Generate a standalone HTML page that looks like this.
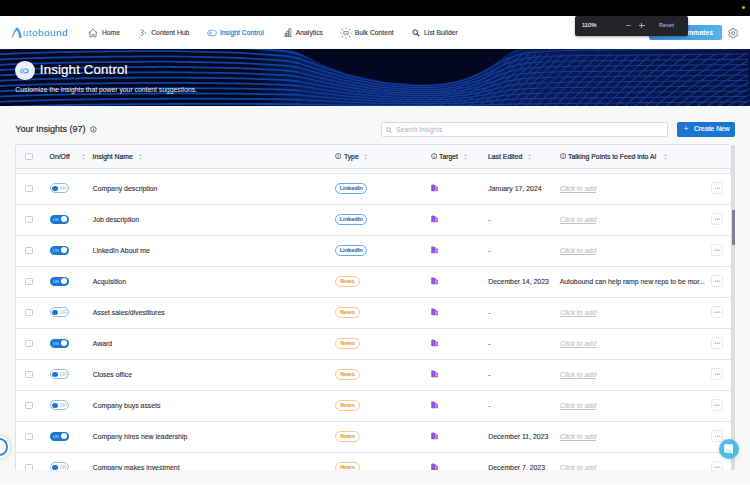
<!DOCTYPE html><html><head><meta charset="utf-8"><style>
*{box-sizing:border-box;margin:0;padding:0}
html,body{width:750px;height:485px;overflow:hidden;background:#f7f8fa;font-family:"Liberation Sans",sans-serif;color:#34343e}
.a{position:absolute}
#top{left:0;top:0;width:750px;height:16px;background:#000}
#nav{left:0;top:16px;width:750px;height:32px;background:#fff}
.ni{position:absolute;top:0.5px;height:32px;line-height:32px;font-size:6.8px;color:#42424e;white-space:nowrap;-webkit-text-stroke-width:0.15px}
.ni svg{position:absolute}
#banner{left:0;top:48.5px;width:750px;height:57.2px;overflow:hidden}
.tg{position:absolute;width:19px;height:9.4px;border-radius:5px}
.tg.on{background:#1b78d4}
.tg.off{background:#fff;border:0.9px solid #8fbfee;height:9.8px}
.tg .kn{position:absolute;width:6px;height:6px;border-radius:50%;top:1.7px}
.tg.on .kn{background:#fff;left:11px}
.tg.off .kn{background:#1b78d4;left:1.2px;top:1.4px;width:5.6px;height:5.6px}
.tg .tt{position:absolute;font-size:4.4px;top:0;line-height:9.4px}
.tg.on .tt{color:#d8e8f8;left:3px;transform:scaleX(0.85);transform-origin:0 0}
.tg.off .tt{color:#8fbcec;left:9px;line-height:9.4px;font-size:4.8px;transform:scaleX(0.78);transform-origin:0 0}
.row{position:absolute;left:16px;width:715px;height:31px;background:#fff;border-bottom:1px solid #e4e6f0}
.cb{position:absolute;width:7.5px;height:7.5px;border:0.9px solid #c9cad3;border-radius:1.5px;background:#fff}
.txt{position:absolute;font-size:6.9px;white-space:nowrap;line-height:8px;margin-top:0.5px;-webkit-text-stroke-width:0.12px}
.badge{position:absolute;height:11px;border-radius:6px;font-size:5.6px;font-weight:bold;line-height:9.4px;text-align:center;background:#fff}
.li{border:0.9px solid #6aa6e4;color:#2c68b4;width:32px;-webkit-text-stroke:0.1px #2c68b4}
.nw{border:0.9px solid #f9c592;color:#f39c44;width:24.5px;-webkit-text-stroke:0.12px #f39c44}
.cta{color:#c2c2ca;font-style:italic;text-decoration:underline}
.dots{position:absolute;width:12px;height:12px;border:0.8px solid #e9eaf1;border-radius:2.5px;background:#fff}
.dots i{position:absolute;top:5.1px;width:1.2px;height:1.2px;background:#9a9ba6;border-radius:50%}
.hd{position:absolute;font-size:6.85px;color:#2e2e38;white-space:nowrap;line-height:8px;-webkit-text-stroke:0.22px #2e2e38}
.srt{position:absolute}
.inf{position:absolute}
</style></head><body><div id="top" class="a"><div class="a" style="left:741.5px;top:5.5px;width:3px;height:3px;border-radius:50%;background:#f5a524"></div></div><div id="nav" class="a"><svg class="a" style="left:11px;top:10.6px" width="12" height="12" viewBox="0 0 12 12"><defs><linearGradient id="lg" x1="0" y1="0" x2="0" y2="1"><stop offset="0" stop-color="#3d8fdc"/><stop offset="1" stop-color="#52baf0"/></linearGradient><linearGradient id="lg2" x1="0" y1="0" x2="1" y2="0"><stop offset="0" stop-color="#5ab4ea"/><stop offset="1" stop-color="#3f95de"/></linearGradient></defs><path d="M0.7 10.6 C 2.1 6.8, 3.8 0.7, 6.2 0.6 C 8 0.6, 9.4 4.8, 11 10.6 L 8.3 10.9 C 7.5 6.8, 6.9 3.6, 5.8 3.4 C 4.7 3.4, 3.1 7.4, 1.6 10.7 Z" fill="url(#lg2)"/></svg><div class="a" style="left:23.3px;top:0.8px;height:32px;line-height:32px;font-size:8.8px;-webkit-text-stroke:0.12px #48a2e2;letter-spacing:0.45px;transform:scaleX(1.12);transform-origin:0 0;color:#3f93dc;background:linear-gradient(90deg,#5ab8ea,#3a86d6);-webkit-background-clip:text;-webkit-text-fill-color:transparent">utobound</div><div class="ni" style="left:88.8px;width:73.10000000000001px"><svg style="left:-0.5px;top:11px" width="10" height="10" viewBox="0 0 24 24"><path d="M2.25 12l8.954-8.955c.44-.439 1.152-.439 1.591 0L21.75 12M4.5 9.75v10.125c0 .621.504 1.125 1.125 1.125H9.75v-4.875c0-.621.504-1.125 1.125-1.125h2.25c.621 0 1.125.504 1.125 1.125V21h4.125c.621 0 1.125-.504 1.125-1.125V9.75" stroke="#55555f" stroke-width="1.7" fill="none" stroke-linecap="round" stroke-linejoin="round"/></svg><span style="position:absolute;left:13.100000000000009px;color:#42424e;font-weight:normal;">Home</span></div><div class="ni" style="left:139.2px;width:72.0px"><svg style="left:0;top:11px" width="8" height="10" viewBox="0 0 8 10"><path d="M1.5 2.5 C3 1.5 5 2 4.5 3.5 C4 4.5 2.5 4.5 2.5 4.5 C4.5 4.8 5 6.5 3.5 7.2 C2.5 7.6 1.5 7 1.2 6.5 M5.5 4 C6.5 4 7 5 6.5 6 M1 8.5 L0.5 9.5" stroke="#666670" stroke-width="0.7" fill="none"/></svg><span style="position:absolute;left:12.0px;color:#42424e;font-weight:normal;">Content Hub</span></div><div class="ni" style="left:206.9px;width:73.0px"><svg style="left:0;top:12px" width="10" height="8" viewBox="0 0 10 8"><rect x="0.6" y="1.2" width="8.8" height="5.6" rx="2.8" stroke="#4a9ae0" stroke-width="0.8" fill="none"/><circle cx="3.4" cy="4" r="1.7" fill="#9cc9f0"/></svg><span style="position:absolute;left:13.0px;color:#3a8ad6;font-weight:normal;-webkit-text-stroke:0.25px #3a8ad6">Insight Control</span></div><div class="ni" style="left:283.7px;width:72.10000000000002px"><svg style="left:0;top:11.5px" width="8" height="9" viewBox="0 0 8 9"><path d="M0.6 8.4 H7.4 M1 8.4 V5.5 H2.8 V8.4 M2.8 8.4 V3.2 H4.8 V8.4 M4.8 8.4 V0.8 H6.8 V8.4" stroke="#55555f" stroke-width="0.7" fill="none"/></svg><span style="position:absolute;left:12.100000000000023px;color:#42424e;font-weight:normal;">Analytics</span></div><div class="ni" style="left:340.4px;width:74.40000000000003px"><svg style="left:0;top:10px" width="12" height="12" viewBox="0 0 12 12"><circle cx="11.00" cy="6.00" r="0.6" fill="#6a6a74"/><circle cx="9.54" cy="9.54" r="0.6" fill="#6a6a74"/><circle cx="6.00" cy="11.00" r="0.6" fill="#6a6a74"/><circle cx="2.46" cy="9.54" r="0.6" fill="#6a6a74"/><circle cx="1.00" cy="6.00" r="0.6" fill="#6a6a74"/><circle cx="2.46" cy="2.46" r="0.6" fill="#6a6a74"/><circle cx="6.00" cy="1.00" r="0.6" fill="#6a6a74"/><circle cx="9.54" cy="2.46" r="0.6" fill="#6a6a74"/><rect x="3.9" y="4.4" width="4.2" height="3.4" stroke="#6a6a74" stroke-width="0.6" fill="none"/><path d="M4.4 6.1 H7.6" stroke="#6a6a74" stroke-width="0.5"/></svg><span style="position:absolute;left:14.400000000000034px;color:#42424e;font-weight:normal;">Bulk Content</span></div><div class="ni" style="left:411.8px;width:72.30000000000001px"><svg style="left:0;top:12px" width="8" height="8" viewBox="0 0 8 8"><circle cx="3.2" cy="3.2" r="2.3" stroke="#2e2e36" stroke-width="1" fill="none"/><path d="M4.9 4.9 L7.2 7.2" stroke="#2e2e36" stroke-width="1.1"/></svg><span style="position:absolute;left:12.300000000000011px;color:#42424e;font-weight:normal;">List Builder</span></div><div class="a" style="left:649px;top:8.5px;width:73px;height:15px;border-radius:2px;background:linear-gradient(90deg,#3a8ad8,#4fb6ea);color:#fff;font-size:6.8px;line-height:15px;text-align:right;padding-right:9px;font-weight:bold">Invite Teammates</div><svg class="a" style="left:726.8px;top:11px" width="12.4" height="12.4" viewBox="0 0 24 24"><path fill="none" stroke="#55555f" stroke-width="1.5" stroke-linejoin="round" d="M9.594 3.94c.09-.542.56-.94 1.11-.94h2.593c.55 0 1.02.398 1.11.94l.213 1.281c.063.374.313.686.645.87.074.04.147.083.22.127.325.196.72.257 1.075.124l1.217-.456a1.125 1.125 0 0 1 1.37.49l1.296 2.247a1.125 1.125 0 0 1-.26 1.431l-1.003.827c-.293.241-.438.613-.43.992a7.723 7.723 0 0 1 0 .255c-.008.378.137.75.43.991l1.004.827c.424.35.534.955.26 1.43l-1.298 2.247a1.125 1.125 0 0 1-1.369.491l-1.217-.456c-.355-.133-.75-.072-1.076.124a6.470 6.470 0 0 1-.22.128c-.331.183-.581.495-.644.869l-.213 1.281c-.09.543-.56.94-1.11.94h-2.594c-.55 0-1.019-.398-1.110-.94l-.213-1.281c-.062-.374-.312-.686-.644-.87a6.520 6.520 0 0 1-.22-.127c-.325-.196-.72-.257-1.076-.124l-1.217.456a1.125 1.125 0 0 1-1.369-.49l-1.297-2.247a1.125 1.125 0 0 1 .26-1.431l1.004-.827c.292-.24.437-.613.43-.991a6.932 6.932 0 0 1 0-.255c.007-.38-.138-.751-.43-.992l-1.004-.827a1.125 1.125 0 0 1-.26-1.43l1.297-2.247a1.125 1.125 0 0 1 1.37-.491l1.216.456c.356.133.751.072 1.076-.124.072-.044.146-.086.22-.128.332-.183.582-.495.644-.869l.214-1.28Z"/><circle cx="12" cy="12" r="3" fill="none" stroke="#55555f" stroke-width="1.5"/></svg></div><div class="a" style="left:575px;top:15.5px;width:113px;height:20px;background:#232428;border-radius:2px;box-shadow:0 1px 3px rgba(0,0,0,0.35)"><span class="a" style="left:7px;top:0.6px;line-height:19px;font-size:5.8px;color:#ededee;-webkit-text-stroke:0.12px #ededee">110%</span><span class="a" style="left:50.5px;top:9.7px;width:5px;height:0.8px;background:#8c8c92"></span><span class="a" style="left:64px;top:9.7px;width:5.5px;height:0.8px;background:#a8a8ae"></span><span class="a" style="left:66.35px;top:7.4px;width:0.8px;height:5.5px;background:#a8a8ae"></span><span class="a" style="left:84px;top:0.6px;line-height:19px;font-size:5.5px;color:#7fa8e8;font-weight:bold">Reset</span></div><div id="banner" class="a"><svg width="750" height="58" viewBox="0 0 750 58" style="position:absolute;left:0;top:0"><rect width="750" height="58" fill="#030820"/><linearGradient id="tint" x1="0" y1="0" x2="1" y2="0"><stop offset="0" stop-color="#0a2470" stop-opacity="0"/><stop offset="0.12" stop-color="#0a2470" stop-opacity="0.85"/><stop offset="0.55" stop-color="#0a2068" stop-opacity="0.8"/><stop offset="1" stop-color="#081a58" stop-opacity="0.6"/></linearGradient><path d="M250 58 L250 0.00 L254 0.00 L258 0.00 L262 0.00 L266 0.00 L270 0.00 L274 0.00 L278 0.03 L282 0.10 L286 0.23 L290 0.52 L294 1.31 L298 2.85 L302 4.90 L306 7.07 L310 9.24 L314 11.30 L318 13.17 L322 14.87 L326 16.52 L330 18.13 L334 19.66 L338 21.11 L342 22.52 L346 23.87 L350 25.07 L354 26.07 L358 26.98 L362 27.86 L366 28.74 L370 29.62 L374 30.50 L378 31.36 L382 32.15 L386 32.75 L390 33.16 L394 33.49 L398 33.81 L402 34.13 L406 34.45 L410 34.76 L414 35.05 L418 35.24 L422 35.28 L426 35.22 L430 35.12 L434 34.96 L438 34.64 L442 34.18 L446 33.64 L450 33.02 L454 32.20 L458 31.14 L462 29.94 L466 28.67 L470 27.22 L474 25.51 L478 23.63 L482 21.68 L486 19.59 L490 17.20 L494 14.50 L498 11.69 L502 8.91 L506 6.31 L510 3.97 L514 2.04 L518 0.84 L522 0.34 L526 0.16 L530 0.06 L534 0.01 L538 0.00 L542 0.00 L546 0.00 L550 0.00 L554 0.00 L558 0.00 L562 0.00 L566 0.00 L570 0.00 L574 0.00 L578 0.00 L582 0.00 L586 0.00 L590 0.00 L594 0.00 L598 0.00 L602 0.00 L606 0.00 L610 0.00 L614 0.00 L618 0.00 L622 0.00 L626 0.00 L630 0.00 L634 0.00 L638 0.00 L642 0.00 L646 0.00 L650 0.00 L654 0.00 L658 0.00 L662 0.00 L666 0.00 L670 0.00 L674 0.00 L678 0.00 L682 0.00 L686 0.00 L690 0.00 L694 0.00 L698 0.00 L702 0.00 L706 0.00 L710 0.00 L714 0.00 L718 0.00 L722 0.00 L726 0.00 L730 0.00 L734 0.00 L738 0.00 L742 0.00 L746 0.00 L750 0.00 L750 58 Z" fill="url(#tint)"/><path d="M0 -10.70 L4 -10.89 L8 -11.08 L12 -11.25 L16 -11.42 L20 -11.57 L24 -11.72 L28 -11.85 L32 -11.98 L36 -12.11 L40 -12.22 L44 -12.33 L48 -12.44 L52 -12.53 L56 -12.63 L60 -12.71 L64 -12.80 L68 -12.88 L72 -12.95 L76 -13.02 L80 -13.08 L84 -13.15 L88 -13.20 L92 -13.26 L96 -13.31 L100 -13.36 L104 -13.41 L108 -13.45 L112 -13.49 L116 -13.53 L120 -13.57 L124 -13.60 L128 -13.64 L132 -13.67 L136 -13.70 L140 -13.73 L144 -13.75 L148 -13.78 L152 -13.80 L156 -13.82 L160 -13.83 L164 -13.83 L168 -13.80 L172 -13.75 L176 -13.67 L180 -13.56 L184 -13.45 L188 -13.32 L192 -13.19 L196 -13.07 L200 -12.93 L204 -12.80 L208 -12.67 L212 -12.54 L216 -12.41 L220 -12.27 L224 -12.14 L228 -11.99 L232 -11.84 L236 -11.65 L240 -11.42 L244 -11.15 L248 -10.84 L252 -10.50 L256 -10.15 L260 -9.79 L264 -9.42 L268 -9.06 L272 -8.69 L276 -8.32 L280 -7.92 L284 -7.45 L288 -6.84 L292 -6.00 L296 -4.87 L300 -3.46" stroke="#0b44a3" stroke-width="1.8" fill="none"/><path d="M300 -3.46 L304 -1.81 L308 -0.04 L312 1.78 L316 3.60 L320 5.41 L324 7.19 L328 8.95 L332 10.71 L336 12.44 L340 14.14 L344 15.76 L348 17.28 L352 18.65 L356 19.90 L360 21.06 L364 22.16 L368 23.23 L372 24.27 L376 25.27 L380 26.18 L384 26.98 L388 27.64 L392 28.19 L396 28.66 L400 29.08 L404 29.47 L408 29.83 L412 30.16 L416 30.41 L420 30.57 L424 30.63 L428 30.57 L432 30.39 L436 30.07 L440 29.59 L444 28.95 L448 28.15 L452 27.18 L456 26.03 L460 24.71 L464 23.20 L468 21.49 L472 19.58 L476 17.46 L480 15.13 L484 12.57 L488 9.79 L492 6.81 L496 3.74 L500 0.73 L504 -2.02 L508 -4.40 L512 -6.39 L516 -8.05 L520 -9.42 L524 -10.51 L528 -11.35 L532 -11.96 L536 -12.40 L540 -12.75" stroke="#133d98" stroke-width="1.3" fill="none"/><path d="M540 -12.75 L544 -13.09 L548 -13.41 L552 -13.70 L556 -13.96 L560 -14.17 L564 -14.33 L568 -14.43 L572 -14.50 L576 -14.56 L580 -14.60 L584 -14.64 L588 -14.68 L592 -14.72 L596 -14.76 L600 -14.80 L604 -14.84 L608 -14.88 L612 -14.92 L616 -14.96 L620 -15.00 L624 -15.04 L628 -15.08 L632 -15.12 L636 -15.16 L640 -15.20 L644 -15.24 L648 -15.28 L652 -15.32 L656 -15.36 L660 -15.40 L664 -15.44 L668 -15.48 L672 -15.52 L676 -15.56 L680 -15.60 L684 -15.64 L688 -15.68 L692 -15.72 L696 -15.76 L700 -15.80 L704 -15.84 L708 -15.88 L712 -15.92 L716 -15.96 L720 -16.00 L724 -16.04 L728 -16.08 L732 -16.12 L736 -16.16 L740 -16.20 L744 -16.24 L748 -16.28" stroke="#12398f" stroke-width="1.1" fill="none"/><path d="M0 -5.40 L4 -5.59 L8 -5.78 L12 -5.95 L16 -6.12 L20 -6.27 L24 -6.42 L28 -6.55 L32 -6.68 L36 -6.81 L40 -6.92 L44 -7.03 L48 -7.14 L52 -7.23 L56 -7.33 L60 -7.41 L64 -7.50 L68 -7.58 L72 -7.65 L76 -7.72 L80 -7.78 L84 -7.85 L88 -7.90 L92 -7.96 L96 -8.01 L100 -8.06 L104 -8.11 L108 -8.15 L112 -8.19 L116 -8.23 L120 -8.27 L124 -8.30 L128 -8.34 L132 -8.37 L136 -8.40 L140 -8.43 L144 -8.45 L148 -8.48 L152 -8.50 L156 -8.52 L160 -8.53 L164 -8.53 L168 -8.51 L172 -8.46 L176 -8.39 L180 -8.29 L184 -8.18 L188 -8.07 L192 -7.95 L196 -7.83 L200 -7.71 L204 -7.59 L208 -7.47 L212 -7.35 L216 -7.23 L220 -7.10 L224 -6.98 L228 -6.85 L232 -6.70 L236 -6.53 L240 -6.32 L244 -6.07 L248 -5.78 L252 -5.47 L256 -5.14 L260 -4.80 L264 -4.47 L268 -4.13 L272 -3.79 L276 -3.45 L280 -3.08 L284 -2.64 L288 -2.08 L292 -1.30 L296 -0.25 L300 1.06" stroke="#0b44a3" stroke-width="1.8" fill="none"/><path d="M300 1.06 L304 2.58 L308 4.22 L312 5.91 L316 7.60 L320 9.27 L324 10.92 L328 12.56 L332 14.18 L336 15.79 L340 17.36 L344 18.87 L348 20.27 L352 21.54 L356 22.70 L360 23.77 L364 24.79 L368 25.78 L372 26.75 L376 27.67 L380 28.52 L384 29.25 L388 29.87 L392 30.38 L396 30.81 L400 31.20 L404 31.56 L408 31.90 L412 32.20 L416 32.44 L420 32.59 L424 32.64 L428 32.59 L432 32.42 L436 32.12 L440 31.68 L444 31.08 L448 30.34 L452 29.44 L456 28.38 L460 27.15 L464 25.75 L468 24.17 L472 22.40 L476 20.44 L480 18.28 L484 15.91 L488 13.33 L492 10.57 L496 7.72 L500 4.94 L504 2.39 L508 0.18 L512 -1.66 L516 -3.20 L520 -4.47 L524 -5.48 L528 -6.26 L532 -6.82 L536 -7.23 L540 -7.56" stroke="#133d98" stroke-width="1.3" fill="none"/><path d="M540 -7.56 L544 -7.88 L548 -8.17 L552 -8.45 L556 -8.69 L560 -8.89 L564 -9.04 L568 -9.14 L572 -9.20 L576 -9.26 L580 -9.30 L584 -9.34 L588 -9.38 L592 -9.42 L596 -9.46 L600 -9.50 L604 -9.54 L608 -9.58 L612 -9.62 L616 -9.66 L620 -9.70 L624 -9.74 L628 -9.78 L632 -9.82 L636 -9.86 L640 -9.90 L644 -9.94 L648 -9.98 L652 -10.02 L656 -10.06 L660 -10.10 L664 -10.14 L668 -10.18 L672 -10.22 L676 -10.26 L680 -10.30 L684 -10.34 L688 -10.38 L692 -10.42 L696 -10.46 L700 -10.50 L704 -10.54 L708 -10.58 L712 -10.62 L716 -10.66 L720 -10.70 L724 -10.74 L728 -10.78 L732 -10.82 L736 -10.86 L740 -10.90 L744 -10.94 L748 -10.98" stroke="#12398f" stroke-width="1.1" fill="none"/><path d="M0 -0.10 L4 -0.29 L8 -0.48 L12 -0.65 L16 -0.82 L20 -0.97 L24 -1.12 L28 -1.25 L32 -1.38 L36 -1.51 L40 -1.62 L44 -1.73 L48 -1.84 L52 -1.93 L56 -2.03 L60 -2.11 L64 -2.20 L68 -2.28 L72 -2.35 L76 -2.42 L80 -2.48 L84 -2.55 L88 -2.60 L92 -2.66 L96 -2.71 L100 -2.76 L104 -2.81 L108 -2.85 L112 -2.89 L116 -2.93 L120 -2.97 L124 -3.00 L128 -3.04 L132 -3.07 L136 -3.10 L140 -3.13 L144 -3.15 L148 -3.18 L152 -3.20 L156 -3.22 L160 -3.23 L164 -3.23 L168 -3.21 L172 -3.17 L176 -3.10 L180 -3.02 L184 -2.92 L188 -2.82 L192 -2.71 L196 -2.60 L200 -2.49 L204 -2.38 L208 -2.27 L212 -2.16 L216 -2.05 L220 -1.94 L224 -1.82 L228 -1.70 L232 -1.56 L236 -1.41 L240 -1.21 L244 -0.98 L248 -0.72 L252 -0.43 L256 -0.13 L260 0.18 L264 0.49 L268 0.80 L272 1.11 L276 1.43 L280 1.77 L284 2.17 L288 2.69 L292 3.40 L296 4.36 L300 5.57" stroke="#0b44a3" stroke-width="1.8" fill="none"/><path d="M300 5.57 L304 6.97 L308 8.48 L312 10.04 L316 11.59 L320 13.13 L324 14.65 L328 16.16 L332 17.65 L336 19.14 L340 20.58 L344 21.97 L348 23.26 L352 24.43 L356 25.50 L360 26.48 L364 27.42 L368 28.34 L372 29.23 L376 30.07 L380 30.85 L384 31.53 L388 32.10 L392 32.57 L396 32.97 L400 33.32 L404 33.66 L408 33.97 L412 34.25 L416 34.46 L420 34.60 L424 34.65 L428 34.60 L432 34.45 L436 34.17 L440 33.76 L444 33.22 L448 32.53 L452 31.71 L456 30.73 L460 29.59 L464 28.31 L468 26.85 L472 25.22 L476 23.41 L480 21.42 L484 19.24 L488 16.87 L492 14.33 L496 11.70 L500 9.14 L504 6.80 L508 4.76 L512 3.06 L516 1.65 L520 0.48 L524 -0.46 L528 -1.17 L532 -1.69 L536 -2.07 L540 -2.36" stroke="#133d98" stroke-width="1.3" fill="none"/><path d="M540 -2.36 L544 -2.66 L548 -2.94 L552 -3.19 L556 -3.42 L560 -3.61 L564 -3.74 L568 -3.84 L572 -3.91 L576 -3.96 L580 -4.00 L584 -4.04 L588 -4.08 L592 -4.12 L596 -4.16 L600 -4.20 L604 -4.24 L608 -4.28 L612 -4.32 L616 -4.36 L620 -4.40 L624 -4.44 L628 -4.48 L632 -4.52 L636 -4.56 L640 -4.60 L644 -4.64 L648 -4.68 L652 -4.72 L656 -4.76 L660 -4.80 L664 -4.84 L668 -4.88 L672 -4.92 L676 -4.96 L680 -5.00 L684 -5.04 L688 -5.08 L692 -5.12 L696 -5.16 L700 -5.20 L704 -5.24 L708 -5.28 L712 -5.32 L716 -5.36 L720 -5.40 L724 -5.44 L728 -5.48 L732 -5.52 L736 -5.56 L740 -5.60 L744 -5.64 L748 -5.68" stroke="#12398f" stroke-width="1.1" fill="none"/><path d="M0 5.20 L4 5.01 L8 4.82 L12 4.65 L16 4.48 L20 4.33 L24 4.18 L28 4.05 L32 3.92 L36 3.79 L40 3.68 L44 3.57 L48 3.46 L52 3.37 L56 3.27 L60 3.19 L64 3.10 L68 3.02 L72 2.95 L76 2.88 L80 2.82 L84 2.75 L88 2.70 L92 2.64 L96 2.59 L100 2.54 L104 2.49 L108 2.45 L112 2.41 L116 2.37 L120 2.33 L124 2.30 L128 2.26 L132 2.23 L136 2.20 L140 2.17 L144 2.15 L148 2.12 L152 2.10 L156 2.08 L160 2.07 L164 2.06 L168 2.08 L172 2.12 L176 2.18 L180 2.25 L184 2.34 L188 2.44 L192 2.53 L196 2.63 L200 2.73 L204 2.83 L208 2.93 L212 3.03 L216 3.13 L220 3.23 L224 3.34 L228 3.45 L232 3.57 L236 3.72 L240 3.89 L244 4.10 L248 4.34 L252 4.60 L256 4.88 L260 5.16 L264 5.44 L268 5.73 L272 6.01 L276 6.30 L280 6.61 L284 6.97 L288 7.45 L292 8.10 L296 8.98 L300 10.09" stroke="#0b44a3" stroke-width="1.8" fill="none"/><path d="M300 10.09 L304 11.37 L308 12.75 L312 14.17 L316 15.59 L320 16.99 L324 18.38 L328 19.76 L332 21.13 L336 22.48 L340 23.80 L344 25.07 L348 26.25 L352 27.32 L356 28.30 L360 29.20 L364 30.06 L368 30.89 L372 31.70 L376 32.48 L380 33.19 L384 33.81 L388 34.33 L392 34.76 L396 35.12 L400 35.45 L404 35.75 L408 36.04 L412 36.29 L416 36.49 L420 36.61 L424 36.66 L428 36.62 L432 36.47 L436 36.22 L440 35.85 L444 35.35 L448 34.72 L452 33.97 L456 33.07 L460 32.04 L464 30.86 L468 29.53 L472 28.04 L476 26.39 L480 24.57 L484 22.58 L488 20.41 L492 18.08 L496 15.69 L500 13.35 L504 11.20 L508 9.34 L512 7.79 L516 6.50 L520 5.43 L524 4.57 L528 3.92 L532 3.45 L536 3.10 L540 2.83" stroke="#133d98" stroke-width="1.3" fill="none"/><path d="M540 2.83 L544 2.56 L548 2.30 L552 2.06 L556 1.85 L560 1.68 L564 1.55 L568 1.46 L572 1.39 L576 1.34 L580 1.30 L584 1.26 L588 1.22 L592 1.18 L596 1.14 L600 1.10 L604 1.06 L608 1.02 L612 0.98 L616 0.94 L620 0.90 L624 0.86 L628 0.82 L632 0.78 L636 0.74 L640 0.70 L644 0.66 L648 0.62 L652 0.58 L656 0.54 L660 0.50 L664 0.46 L668 0.42 L672 0.38 L676 0.34 L680 0.30 L684 0.26 L688 0.22 L692 0.18 L696 0.14 L700 0.10 L704 0.06 L708 0.02 L712 -0.02 L716 -0.06 L720 -0.10 L724 -0.14 L728 -0.18 L732 -0.22 L736 -0.26 L740 -0.30 L744 -0.34 L748 -0.38" stroke="#12398f" stroke-width="1.1" fill="none"/><path d="M0 10.50 L4 10.31 L8 10.12 L12 9.95 L16 9.78 L20 9.63 L24 9.48 L28 9.35 L32 9.22 L36 9.09 L40 8.98 L44 8.87 L48 8.76 L52 8.67 L56 8.57 L60 8.49 L64 8.40 L68 8.32 L72 8.25 L76 8.18 L80 8.12 L84 8.05 L88 8.00 L92 7.94 L96 7.89 L100 7.84 L104 7.79 L108 7.75 L112 7.71 L116 7.67 L120 7.63 L124 7.60 L128 7.56 L132 7.53 L136 7.50 L140 7.47 L144 7.45 L148 7.42 L152 7.40 L156 7.38 L160 7.37 L164 7.36 L168 7.37 L172 7.41 L176 7.46 L180 7.53 L184 7.61 L188 7.69 L192 7.78 L196 7.86 L200 7.95 L204 8.04 L208 8.13 L212 8.22 L216 8.31 L220 8.40 L224 8.50 L228 8.60 L232 8.71 L236 8.84 L240 8.99 L244 9.18 L248 9.40 L252 9.64 L256 9.89 L260 10.14 L264 10.40 L268 10.65 L272 10.91 L276 11.17 L280 11.45 L284 11.78 L288 12.21 L292 12.80 L296 13.60 L300 14.60" stroke="#0b44a3" stroke-width="1.8" fill="none"/><path d="M300 14.60 L304 15.76 L308 17.01 L312 18.30 L316 19.58 L320 20.86 L324 22.12 L328 23.36 L332 24.60 L336 25.83 L340 27.02 L344 28.17 L348 29.24 L352 30.21 L356 31.09 L360 31.91 L364 32.69 L368 33.44 L372 34.18 L376 34.88 L380 35.53 L384 36.09 L388 36.56 L392 36.94 L396 37.27 L400 37.57 L404 37.85 L408 38.11 L412 38.33 L416 38.51 L420 38.63 L424 38.67 L428 38.63 L432 38.50 L436 38.27 L440 37.93 L444 37.48 L448 36.92 L452 36.23 L456 35.42 L460 34.48 L464 33.42 L468 32.21 L472 30.86 L476 29.37 L480 27.72 L484 25.91 L488 23.95 L492 21.84 L496 19.67 L500 17.55 L504 15.61 L508 13.93 L512 12.52 L516 11.35 L520 10.38 L524 9.60 L528 9.01 L532 8.58 L536 8.27 L540 8.02" stroke="#133d98" stroke-width="1.3" fill="none"/><path d="M540 8.02 L544 7.77 L548 7.54 L552 7.32 L556 7.12 L560 6.96 L564 6.84 L568 6.75 L572 6.69 L576 6.64 L580 6.60 L584 6.56 L588 6.52 L592 6.48 L596 6.44 L600 6.40 L604 6.36 L608 6.32 L612 6.28 L616 6.24 L620 6.20 L624 6.16 L628 6.12 L632 6.08 L636 6.04 L640 6.00 L644 5.96 L648 5.92 L652 5.88 L656 5.84 L660 5.80 L664 5.76 L668 5.72 L672 5.68 L676 5.64 L680 5.60 L684 5.56 L688 5.52 L692 5.48 L696 5.44 L700 5.40 L704 5.36 L708 5.32 L712 5.28 L716 5.24 L720 5.20 L724 5.16 L728 5.12 L732 5.08 L736 5.04 L740 5.00 L744 4.96 L748 4.92" stroke="#12398f" stroke-width="1.1" fill="none"/><path d="M0 15.80 L4 15.61 L8 15.42 L12 15.25 L16 15.08 L20 14.93 L24 14.78 L28 14.65 L32 14.52 L36 14.39 L40 14.28 L44 14.17 L48 14.06 L52 13.97 L56 13.87 L60 13.79 L64 13.70 L68 13.62 L72 13.55 L76 13.48 L80 13.42 L84 13.35 L88 13.30 L92 13.24 L96 13.19 L100 13.14 L104 13.09 L108 13.05 L112 13.01 L116 12.97 L120 12.93 L124 12.90 L128 12.86 L132 12.83 L136 12.80 L140 12.77 L144 12.75 L148 12.72 L152 12.70 L156 12.68 L160 12.66 L164 12.66 L168 12.67 L172 12.70 L176 12.74 L180 12.80 L184 12.87 L188 12.94 L192 13.02 L196 13.10 L200 13.17 L204 13.25 L208 13.33 L212 13.41 L216 13.49 L220 13.57 L224 13.66 L228 13.74 L232 13.84 L236 13.96 L240 14.10 L244 14.27 L248 14.46 L252 14.67 L256 14.90 L260 15.12 L264 15.35 L268 15.58 L272 15.81 L276 16.05 L280 16.30 L284 16.59 L288 16.98 L292 17.51 L296 18.22 L300 19.12" stroke="#0b44a3" stroke-width="1.8" fill="none"/><path d="M300 19.12 L304 20.15 L308 21.27 L312 22.43 L316 23.58 L320 24.72 L324 25.85 L328 26.96 L332 28.07 L336 29.17 L340 30.25 L344 31.27 L348 32.23 L352 33.10 L356 33.89 L360 34.62 L364 35.32 L368 36.00 L372 36.65 L376 37.28 L380 37.86 L384 38.37 L388 38.79 L392 39.13 L396 39.43 L400 39.69 L404 39.94 L408 40.17 L412 40.38 L416 40.54 L420 40.64 L424 40.68 L428 40.64 L432 40.53 L436 40.32 L440 40.02 L444 39.61 L448 39.11 L452 38.49 L456 37.77 L460 36.93 L464 35.97 L468 34.89 L472 33.68 L476 32.34 L480 30.86 L484 29.25 L488 27.49 L492 25.60 L496 23.65 L500 21.75 L504 20.01 L508 18.51 L512 17.24 L516 16.19 L520 15.33 L524 14.63 L528 14.10 L532 13.72 L536 13.44 L540 13.22" stroke="#133d98" stroke-width="1.3" fill="none"/><path d="M540 13.22 L544 12.99 L548 12.77 L552 12.57 L556 12.39 L560 12.24 L564 12.13 L568 12.05 L572 11.99 L576 11.94 L580 11.90 L584 11.86 L588 11.82 L592 11.78 L596 11.74 L600 11.70 L604 11.66 L608 11.62 L612 11.58 L616 11.54 L620 11.50 L624 11.46 L628 11.42 L632 11.38 L636 11.34 L640 11.30 L644 11.26 L648 11.22 L652 11.18 L656 11.14 L660 11.10 L664 11.06 L668 11.02 L672 10.98 L676 10.94 L680 10.90 L684 10.86 L688 10.82 L692 10.78 L696 10.74 L700 10.70 L704 10.66 L708 10.62 L712 10.58 L716 10.54 L720 10.50 L724 10.46 L728 10.42 L732 10.38 L736 10.34 L740 10.30 L744 10.26 L748 10.22" stroke="#12398f" stroke-width="1.1" fill="none"/><path d="M0 21.10 L4 20.91 L8 20.72 L12 20.55 L16 20.38 L20 20.23 L24 20.08 L28 19.95 L32 19.82 L36 19.69 L40 19.58 L44 19.47 L48 19.36 L52 19.27 L56 19.17 L60 19.09 L64 19.00 L68 18.92 L72 18.85 L76 18.78 L80 18.72 L84 18.65 L88 18.60 L92 18.54 L96 18.49 L100 18.44 L104 18.39 L108 18.35 L112 18.31 L116 18.27 L120 18.23 L124 18.20 L128 18.16 L132 18.13 L136 18.10 L140 18.07 L144 18.05 L148 18.02 L152 18.00 L156 17.98 L160 17.96 L164 17.96 L168 17.96 L172 17.98 L176 18.02 L180 18.07 L184 18.13 L188 18.20 L192 18.26 L196 18.33 L200 18.40 L204 18.46 L208 18.53 L212 18.60 L216 18.67 L220 18.74 L224 18.82 L228 18.89 L232 18.98 L236 19.08 L240 19.20 L244 19.35 L248 19.52 L252 19.71 L256 19.91 L260 20.11 L264 20.31 L268 20.51 L272 20.71 L276 20.92 L280 21.14 L284 21.40 L288 21.74 L292 22.21 L296 22.84 L300 23.63" stroke="#0b44a3" stroke-width="1.8" fill="none"/><path d="M300 23.63 L304 24.55 L308 25.54 L312 26.56 L316 27.57 L320 28.58 L324 29.58 L328 30.57 L332 31.55 L336 32.52 L340 33.47 L344 34.37 L348 35.22 L352 35.99 L356 36.69 L360 37.33 L364 37.95 L368 38.55 L372 39.13 L376 39.69 L380 40.20 L384 40.64 L388 41.02 L392 41.32 L396 41.58 L400 41.82 L404 42.04 L408 42.24 L412 42.42 L416 42.56 L420 42.65 L424 42.69 L428 42.66 L432 42.55 L436 42.37 L440 42.10 L444 41.75 L448 41.30 L452 40.76 L456 40.11 L460 39.37 L464 38.53 L468 37.57 L472 36.50 L476 35.32 L480 34.01 L484 32.58 L488 31.03 L492 29.36 L496 27.64 L500 25.96 L504 24.42 L508 23.09 L512 21.97 L516 21.04 L520 20.28 L524 19.66 L528 19.19 L532 18.85 L536 18.61 L540 18.41" stroke="#133d98" stroke-width="1.3" fill="none"/><path d="M540 18.41 L544 18.20 L548 18.01 L552 17.83 L556 17.66 L560 17.53 L564 17.42 L568 17.35 L572 17.29 L576 17.24 L580 17.20 L584 17.16 L588 17.12 L592 17.08 L596 17.04 L600 17.00 L604 16.96 L608 16.92 L612 16.88 L616 16.84 L620 16.80 L624 16.76 L628 16.72 L632 16.68 L636 16.64 L640 16.60 L644 16.56 L648 16.52 L652 16.48 L656 16.44 L660 16.40 L664 16.36 L668 16.32 L672 16.28 L676 16.24 L680 16.20 L684 16.16 L688 16.12 L692 16.08 L696 16.04 L700 16.00 L704 15.96 L708 15.92 L712 15.88 L716 15.84 L720 15.80 L724 15.76 L728 15.72 L732 15.68 L736 15.64 L740 15.60 L744 15.56 L748 15.52" stroke="#12398f" stroke-width="1.1" fill="none"/><path d="M0 26.40 L4 26.21 L8 26.02 L12 25.85 L16 25.68 L20 25.53 L24 25.38 L28 25.25 L32 25.12 L36 24.99 L40 24.88 L44 24.77 L48 24.66 L52 24.57 L56 24.47 L60 24.39 L64 24.30 L68 24.22 L72 24.15 L76 24.08 L80 24.02 L84 23.95 L88 23.90 L92 23.84 L96 23.79 L100 23.74 L104 23.69 L108 23.65 L112 23.61 L116 23.57 L120 23.53 L124 23.50 L128 23.46 L132 23.43 L136 23.40 L140 23.37 L144 23.35 L148 23.32 L152 23.30 L156 23.28 L160 23.26 L164 23.25 L168 23.26 L172 23.27 L176 23.30 L180 23.35 L184 23.39 L188 23.45 L192 23.50 L196 23.56 L200 23.62 L204 23.67 L208 23.73 L212 23.79 L216 23.85 L220 23.91 L224 23.97 L228 24.04 L232 24.11 L236 24.20 L240 24.31 L244 24.44 L248 24.58 L252 24.75 L256 24.91 L260 25.09 L264 25.26 L268 25.44 L272 25.61 L276 25.79 L280 25.98 L284 26.21 L288 26.50 L292 26.91 L296 27.46 L300 28.14" stroke="#0b44a3" stroke-width="1.8" fill="none"/><path d="M300 28.14 L304 28.94 L308 29.80 L312 30.68 L316 31.57 L320 32.45 L324 33.31 L328 34.17 L332 35.02 L336 35.86 L340 36.69 L344 37.47 L348 38.21 L352 38.88 L356 39.48 L360 40.05 L364 40.58 L368 41.10 L372 41.61 L376 42.09 L380 42.53 L384 42.92 L388 43.24 L392 43.51 L396 43.74 L400 43.94 L404 44.13 L408 44.31 L412 44.47 L416 44.59 L420 44.67 L424 44.70 L428 44.67 L432 44.58 L436 44.42 L440 44.19 L444 43.88 L448 43.49 L452 43.02 L456 42.46 L460 41.82 L464 41.08 L468 40.25 L472 39.32 L476 38.29 L480 37.16 L484 35.92 L488 34.56 L492 33.12 L496 31.62 L500 30.16 L504 28.82 L508 27.67 L512 26.70 L516 25.89 L520 25.23 L524 24.69 L528 24.29 L532 23.99 L536 23.77 L540 23.61" stroke="#133d98" stroke-width="1.3" fill="none"/><path d="M540 23.61 L544 23.42 L548 23.24 L552 23.08 L556 22.93 L560 22.81 L564 22.71 L568 22.64 L572 22.59 L576 22.54 L580 22.50 L584 22.46 L588 22.42 L592 22.38 L596 22.34 L600 22.30 L604 22.26 L608 22.22 L612 22.18 L616 22.14 L620 22.10 L624 22.06 L628 22.02 L632 21.98 L636 21.94 L640 21.90 L644 21.86 L648 21.82 L652 21.78 L656 21.74 L660 21.70 L664 21.66 L668 21.62 L672 21.58 L676 21.54 L680 21.50 L684 21.46 L688 21.42 L692 21.38 L696 21.34 L700 21.30 L704 21.26 L708 21.22 L712 21.18 L716 21.14 L720 21.10 L724 21.06 L728 21.02 L732 20.98 L736 20.94 L740 20.90 L744 20.86 L748 20.82" stroke="#12398f" stroke-width="1.1" fill="none"/><path d="M0 31.70 L4 31.51 L8 31.32 L12 31.15 L16 30.98 L20 30.83 L24 30.68 L28 30.55 L32 30.42 L36 30.29 L40 30.18 L44 30.07 L48 29.96 L52 29.87 L56 29.77 L60 29.69 L64 29.60 L68 29.52 L72 29.45 L76 29.38 L80 29.32 L84 29.25 L88 29.20 L92 29.14 L96 29.09 L100 29.04 L104 28.99 L108 28.95 L112 28.91 L116 28.87 L120 28.83 L124 28.80 L128 28.76 L132 28.73 L136 28.70 L140 28.67 L144 28.65 L148 28.62 L152 28.60 L156 28.58 L160 28.56 L164 28.55 L168 28.55 L172 28.56 L176 28.59 L180 28.62 L184 28.66 L188 28.70 L192 28.75 L196 28.79 L200 28.84 L204 28.89 L208 28.93 L212 28.98 L216 29.03 L220 29.08 L224 29.13 L228 29.19 L232 29.25 L236 29.32 L240 29.41 L244 29.52 L248 29.64 L252 29.78 L256 29.92 L260 30.07 L264 30.22 L268 30.36 L272 30.51 L276 30.66 L280 30.83 L284 31.02 L288 31.27 L292 31.61 L296 32.08 L300 32.66" stroke="#0b44a3" stroke-width="1.8" fill="none"/><path d="M300 32.66 L304 33.33 L308 34.06 L312 34.81 L316 35.56 L320 36.31 L324 37.04 L328 37.77 L332 38.49 L336 39.21 L340 39.91 L344 40.58 L348 41.20 L352 41.77 L356 42.28 L360 42.76 L364 43.21 L368 43.65 L372 44.08 L376 44.49 L380 44.87 L384 45.20 L388 45.47 L392 45.70 L396 45.89 L400 46.06 L404 46.23 L408 46.38 L412 46.51 L416 46.62 L420 46.68 L424 46.71 L428 46.68 L432 46.61 L436 46.47 L440 46.28 L444 46.01 L448 45.68 L452 45.28 L456 44.81 L460 44.26 L464 43.64 L468 42.93 L472 42.15 L476 41.27 L480 40.31 L484 39.25 L488 38.10 L492 36.87 L496 35.60 L500 34.36 L504 33.23 L508 32.25 L512 31.42 L516 30.74 L520 30.18 L524 29.72 L528 29.38 L532 29.13 L536 28.94 L540 28.80" stroke="#133d98" stroke-width="1.3" fill="none"/><path d="M540 28.80 L544 28.63 L548 28.48 L552 28.34 L556 28.20 L560 28.09 L564 28.01 L568 27.94 L572 27.89 L576 27.84 L580 27.80 L584 27.76 L588 27.72 L592 27.68 L596 27.64 L600 27.60 L604 27.56 L608 27.52 L612 27.48 L616 27.44 L620 27.40 L624 27.36 L628 27.32 L632 27.28 L636 27.24 L640 27.20 L644 27.16 L648 27.12 L652 27.08 L656 27.04 L660 27.00 L664 26.96 L668 26.92 L672 26.88 L676 26.84 L680 26.80 L684 26.76 L688 26.72 L692 26.68 L696 26.64 L700 26.60 L704 26.56 L708 26.52 L712 26.48 L716 26.44 L720 26.40 L724 26.36 L728 26.32 L732 26.28 L736 26.24 L740 26.20 L744 26.16 L748 26.12" stroke="#12398f" stroke-width="1.1" fill="none"/><path d="M0 37.00 L4 36.81 L8 36.62 L12 36.45 L16 36.28 L20 36.13 L24 35.98 L28 35.85 L32 35.72 L36 35.59 L40 35.48 L44 35.37 L48 35.26 L52 35.17 L56 35.07 L60 34.99 L64 34.90 L68 34.82 L72 34.75 L76 34.68 L80 34.62 L84 34.55 L88 34.50 L92 34.44 L96 34.39 L100 34.34 L104 34.29 L108 34.25 L112 34.21 L116 34.17 L120 34.13 L124 34.10 L128 34.06 L132 34.03 L136 34.00 L140 33.97 L144 33.95 L148 33.92 L152 33.90 L156 33.88 L160 33.86 L164 33.85 L168 33.84 L172 33.85 L176 33.87 L180 33.89 L184 33.92 L188 33.95 L192 33.99 L196 34.02 L200 34.06 L204 34.10 L208 34.13 L212 34.17 L216 34.21 L220 34.25 L224 34.29 L228 34.34 L232 34.38 L236 34.44 L240 34.51 L244 34.60 L248 34.70 L252 34.82 L256 34.93 L260 35.05 L264 35.17 L268 35.29 L272 35.41 L276 35.54 L280 35.67 L284 35.83 L288 36.03 L292 36.31 L296 36.69 L300 37.17" stroke="#0b44a3" stroke-width="1.8" fill="none"/><path d="M300 37.17 L304 37.73 L308 38.33 L312 38.94 L316 39.56 L320 40.17 L324 40.77 L328 41.37 L332 41.97 L336 42.55 L340 43.13 L344 43.68 L348 44.19 L352 44.66 L356 45.08 L360 45.47 L364 45.84 L368 46.21 L372 46.56 L376 46.90 L380 47.21 L384 47.48 L388 47.70 L392 47.89 L396 48.05 L400 48.19 L404 48.32 L408 48.45 L412 48.55 L416 48.64 L420 48.70 L424 48.71 L428 48.70 L432 48.63 L436 48.52 L440 48.36 L444 48.14 L448 47.87 L452 47.54 L456 47.15 L460 46.70 L464 46.19 L468 45.61 L472 44.97 L476 44.25 L480 43.45 L484 42.59 L488 41.64 L492 40.63 L496 39.59 L500 38.57 L504 37.64 L508 36.83 L512 36.15 L516 35.59 L520 35.12 L524 34.75 L528 34.47 L532 34.26 L536 34.11 L540 33.99" stroke="#133d98" stroke-width="1.3" fill="none"/><path d="M540 33.99 L544 33.85 L548 33.72 L552 33.59 L556 33.48 L560 33.38 L564 33.30 L568 33.24 L572 33.19 L576 33.14 L580 33.10 L584 33.06 L588 33.02 L592 32.98 L596 32.94 L600 32.90 L604 32.86 L608 32.82 L612 32.78 L616 32.74 L620 32.70 L624 32.66 L628 32.62 L632 32.58 L636 32.54 L640 32.50 L644 32.46 L648 32.42 L652 32.38 L656 32.34 L660 32.30 L664 32.26 L668 32.22 L672 32.18 L676 32.14 L680 32.10 L684 32.06 L688 32.02 L692 31.98 L696 31.94 L700 31.90 L704 31.86 L708 31.82 L712 31.78 L716 31.74 L720 31.70 L724 31.66 L728 31.62 L732 31.58 L736 31.54 L740 31.50 L744 31.46 L748 31.42" stroke="#12398f" stroke-width="1.1" fill="none"/><path d="M0 42.30 L4 42.11 L8 41.92 L12 41.75 L16 41.58 L20 41.43 L24 41.28 L28 41.15 L32 41.02 L36 40.89 L40 40.78 L44 40.67 L48 40.56 L52 40.47 L56 40.37 L60 40.29 L64 40.20 L68 40.12 L72 40.05 L76 39.98 L80 39.92 L84 39.85 L88 39.80 L92 39.74 L96 39.69 L100 39.64 L104 39.59 L108 39.55 L112 39.51 L116 39.47 L120 39.43 L124 39.40 L128 39.36 L132 39.33 L136 39.30 L140 39.27 L144 39.25 L148 39.22 L152 39.20 L156 39.18 L160 39.16 L164 39.15 L168 39.14 L172 39.14 L176 39.15 L180 39.16 L184 39.18 L188 39.21 L192 39.23 L196 39.26 L200 39.28 L204 39.31 L208 39.34 L212 39.36 L216 39.39 L220 39.42 L224 39.45 L228 39.48 L232 39.52 L236 39.56 L240 39.62 L244 39.69 L248 39.76 L252 39.85 L256 39.94 L260 40.03 L264 40.13 L268 40.22 L272 40.31 L276 40.41 L280 40.51 L284 40.64 L288 40.79 L292 41.02 L296 41.31 L300 41.69" stroke="#0b44a3" stroke-width="1.8" fill="none"/><path d="M300 41.69 L304 42.12 L308 42.59 L312 43.07 L316 43.56 L320 44.03 L324 44.51 L328 44.97 L332 45.44 L336 45.90 L340 46.35 L344 46.78 L348 47.18 L352 47.55 L356 47.88 L360 48.18 L364 48.48 L368 48.76 L372 49.04 L376 49.30 L380 49.54 L384 49.75 L388 49.93 L392 50.08 L396 50.20 L400 50.31 L404 50.42 L408 50.51 L412 50.60 L416 50.67 L420 50.71 L424 50.72 L428 50.71 L432 50.66 L436 50.57 L440 50.45 L444 50.28 L448 50.06 L452 49.81 L456 49.50 L460 49.15 L464 48.75 L468 48.29 L472 47.79 L476 47.22 L480 46.60 L484 45.92 L488 45.18 L492 44.39 L496 43.57 L500 42.77 L504 42.04 L508 41.41 L512 40.88 L516 40.44 L520 40.07 L524 39.78 L528 39.56 L532 39.40 L536 39.28 L540 39.19" stroke="#133d98" stroke-width="1.3" fill="none"/><path d="M540 39.19 L544 39.07 L548 38.95 L552 38.84 L556 38.75 L560 38.66 L564 38.59 L568 38.53 L572 38.49 L576 38.44 L580 38.40 L584 38.36 L588 38.32 L592 38.28 L596 38.24 L600 38.20 L604 38.16 L608 38.12 L612 38.08 L616 38.04 L620 38.00 L624 37.96 L628 37.92 L632 37.88 L636 37.84 L640 37.80 L644 37.76 L648 37.72 L652 37.68 L656 37.64 L660 37.60 L664 37.56 L668 37.52 L672 37.48 L676 37.44 L680 37.40 L684 37.36 L688 37.32 L692 37.28 L696 37.24 L700 37.20 L704 37.16 L708 37.12 L712 37.08 L716 37.04 L720 37.00 L724 36.96 L728 36.92 L732 36.88 L736 36.84 L740 36.80 L744 36.76 L748 36.72" stroke="#12398f" stroke-width="1.1" fill="none"/><path d="M0 47.60 L4 47.41 L8 47.22 L12 47.05 L16 46.88 L20 46.73 L24 46.58 L28 46.45 L32 46.32 L36 46.19 L40 46.08 L44 45.97 L48 45.86 L52 45.77 L56 45.67 L60 45.59 L64 45.50 L68 45.42 L72 45.35 L76 45.28 L80 45.22 L84 45.15 L88 45.10 L92 45.04 L96 44.99 L100 44.94 L104 44.89 L108 44.85 L112 44.81 L116 44.77 L120 44.73 L124 44.70 L128 44.66 L132 44.63 L136 44.60 L140 44.57 L144 44.55 L148 44.52 L152 44.50 L156 44.48 L160 44.46 L164 44.44 L168 44.43 L172 44.43 L176 44.43 L180 44.44 L184 44.45 L188 44.46 L192 44.47 L196 44.49 L200 44.50 L204 44.52 L208 44.54 L212 44.55 L216 44.57 L220 44.59 L224 44.61 L228 44.63 L232 44.65 L236 44.69 L240 44.72 L244 44.77 L248 44.83 L252 44.89 L256 44.95 L260 45.01 L264 45.08 L268 45.15 L272 45.21 L276 45.28 L280 45.36 L284 45.44 L288 45.56 L292 45.72 L296 45.93 L300 46.20" stroke="#0b44a3" stroke-width="1.8" fill="none"/><path d="M300 46.20 L304 46.52 L308 46.85 L312 47.20 L316 47.55 L320 47.90 L324 48.24 L328 48.58 L332 48.91 L336 49.24 L340 49.57 L344 49.88 L348 50.17 L352 50.43 L356 50.67 L360 50.90 L364 51.11 L368 51.31 L372 51.51 L376 51.70 L380 51.88 L384 52.03 L388 52.16 L392 52.27 L396 52.35 L400 52.44 L404 52.51 L408 52.58 L412 52.64 L416 52.69 L420 52.72 L424 52.73 L428 52.72 L432 52.69 L436 52.63 L440 52.53 L444 52.41 L448 52.26 L452 52.07 L456 51.85 L460 51.59 L464 51.30 L468 50.97 L472 50.61 L476 50.20 L480 49.75 L484 49.26 L488 48.72 L492 48.15 L496 47.55 L500 46.98 L504 46.45 L508 45.99 L512 45.60 L516 45.29 L520 45.02 L524 44.81 L528 44.65 L532 44.53 L536 44.45 L540 44.38" stroke="#133d98" stroke-width="1.3" fill="none"/><path d="M540 44.38 L544 44.28 L548 44.19 L552 44.10 L556 44.02 L560 43.94 L564 43.88 L568 43.83 L572 43.78 L576 43.74 L580 43.70 L584 43.66 L588 43.62 L592 43.58 L596 43.54 L600 43.50 L604 43.46 L608 43.42 L612 43.38 L616 43.34 L620 43.30 L624 43.26 L628 43.22 L632 43.18 L636 43.14 L640 43.10 L644 43.06 L648 43.02 L652 42.98 L656 42.94 L660 42.90 L664 42.86 L668 42.82 L672 42.78 L676 42.74 L680 42.70 L684 42.66 L688 42.62 L692 42.58 L696 42.54 L700 42.50 L704 42.46 L708 42.42 L712 42.38 L716 42.34 L720 42.30 L724 42.26 L728 42.22 L732 42.18 L736 42.14 L740 42.10 L744 42.06 L748 42.02" stroke="#12398f" stroke-width="1.1" fill="none"/><path d="M0 52.90 L4 52.71 L8 52.52 L12 52.35 L16 52.18 L20 52.03 L24 51.88 L28 51.75 L32 51.62 L36 51.49 L40 51.38 L44 51.27 L48 51.16 L52 51.07 L56 50.97 L60 50.89 L64 50.80 L68 50.72 L72 50.65 L76 50.58 L80 50.52 L84 50.45 L88 50.40 L92 50.34 L96 50.29 L100 50.24 L104 50.19 L108 50.15 L112 50.11 L116 50.07 L120 50.03 L124 50.00 L128 49.96 L132 49.93 L136 49.90 L140 49.87 L144 49.85 L148 49.82 L152 49.80 L156 49.78 L160 49.76 L164 49.74 L168 49.73 L172 49.72 L176 49.71 L180 49.71 L184 49.71 L188 49.71 L192 49.72 L196 49.72 L200 49.73 L204 49.73 L208 49.74 L212 49.74 L216 49.75 L220 49.76 L224 49.77 L228 49.78 L232 49.79 L236 49.81 L240 49.83 L244 49.85 L248 49.89 L252 49.92 L256 49.96 L260 50.00 L264 50.04 L268 50.07 L272 50.11 L276 50.16 L280 50.20 L284 50.25 L288 50.32 L292 50.42 L296 50.55 L300 50.72" stroke="#0b44a3" stroke-width="1.8" fill="none"/><path d="M300 50.72 L304 50.91 L308 51.12 L312 51.33 L316 51.55 L320 51.76 L324 51.97 L328 52.18 L332 52.38 L336 52.59 L340 52.79 L344 52.98 L348 53.16 L352 53.32 L356 53.47 L360 53.61 L364 53.74 L368 53.87 L372 53.99 L376 54.11 L380 54.22 L384 54.31 L388 54.39 L392 54.45 L396 54.51 L400 54.56 L404 54.61 L408 54.65 L412 54.69 L416 54.72 L420 54.74 L424 54.74 L428 54.74 L432 54.71 L436 54.68 L440 54.62 L444 54.54 L448 54.45 L452 54.33 L456 54.19 L460 54.04 L464 53.86 L468 53.65 L472 53.43 L476 53.17 L480 52.90 L484 52.59 L488 52.26 L492 51.90 L496 51.54 L500 51.18 L504 50.85 L508 50.57 L512 50.33 L516 50.13 L520 49.97 L524 49.84 L528 49.74 L532 49.67 L536 49.62 L540 49.57" stroke="#133d98" stroke-width="1.3" fill="none"/><path d="M540 49.57 L544 49.50 L548 49.42 L552 49.35 L556 49.29 L560 49.23 L564 49.17 L568 49.13 L572 49.08 L576 49.04 L580 49.00 L584 48.96 L588 48.92 L592 48.88 L596 48.84 L600 48.80 L604 48.76 L608 48.72 L612 48.68 L616 48.64 L620 48.60 L624 48.56 L628 48.52 L632 48.48 L636 48.44 L640 48.40 L644 48.36 L648 48.32 L652 48.28 L656 48.24 L660 48.20 L664 48.16 L668 48.12 L672 48.08 L676 48.04 L680 48.00 L684 47.96 L688 47.92 L692 47.88 L696 47.84 L700 47.80 L704 47.76 L708 47.72 L712 47.68 L716 47.64 L720 47.60 L724 47.56 L728 47.52 L732 47.48 L736 47.44 L740 47.40 L744 47.36 L748 47.32" stroke="#12398f" stroke-width="1.1" fill="none"/><path d="M0 58.20 L4 58.01 L8 57.82 L12 57.65 L16 57.48 L20 57.33 L24 57.18 L28 57.05 L32 56.92 L36 56.79 L40 56.68 L44 56.57 L48 56.46 L52 56.37 L56 56.27 L60 56.19 L64 56.10 L68 56.02 L72 55.95 L76 55.88 L80 55.82 L84 55.75 L88 55.70 L92 55.64 L96 55.59 L100 55.54 L104 55.49 L108 55.45 L112 55.41 L116 55.37 L120 55.33 L124 55.30 L128 55.26 L132 55.23 L136 55.20 L140 55.17 L144 55.15 L148 55.12 L152 55.10 L156 55.08 L160 55.06 L164 55.04 L168 55.02 L172 55.01 L176 54.99 L180 54.98 L184 54.97 L188 54.97 L192 54.96 L196 54.95 L200 54.95 L204 54.94 L208 54.94 L212 54.93 L216 54.93 L220 54.93 L224 54.93 L228 54.93 L232 54.93 L236 54.93 L240 54.93 L244 54.94 L248 54.95 L252 54.96 L256 54.97 L260 54.98 L264 54.99 L268 55.00 L272 55.02 L276 55.03 L280 55.04 L284 55.06 L288 55.09 L292 55.12 L296 55.17 L300 55.23" stroke="#0b44a3" stroke-width="1.8" fill="none"/><path d="M300 55.23 L304 55.30 L308 55.38 L312 55.46 L316 55.54 L320 55.62 L324 55.70 L328 55.78 L332 55.86 L336 55.94 L340 56.01 L344 56.08 L348 56.15 L352 56.21 L356 56.27 L360 56.32 L364 56.37 L368 56.42 L372 56.47 L376 56.51 L380 56.55 L384 56.59 L388 56.62 L392 56.64 L396 56.66 L400 56.68 L404 56.70 L408 56.72 L412 56.73 L416 56.74 L420 56.75 L424 56.75 L428 56.75 L432 56.74 L436 56.73 L440 56.70 L444 56.67 L448 56.64 L452 56.59 L456 56.54 L460 56.48 L464 56.41 L468 56.33 L472 56.25 L476 56.15 L480 56.04 L484 55.93 L488 55.80 L492 55.66 L496 55.52 L500 55.38 L504 55.26 L508 55.15 L512 55.06 L516 54.98 L520 54.92 L524 54.87 L528 54.83 L532 54.80 L536 54.78 L540 54.77" stroke="#133d98" stroke-width="1.3" fill="none"/><path d="M540 54.77 L544 54.71 L548 54.66 L552 54.61 L556 54.56 L560 54.51 L564 54.47 L568 54.42 L572 54.38 L576 54.34 L580 54.30 L584 54.26 L588 54.22 L592 54.18 L596 54.14 L600 54.10 L604 54.06 L608 54.02 L612 53.98 L616 53.94 L620 53.90 L624 53.86 L628 53.82 L632 53.78 L636 53.74 L640 53.70 L644 53.66 L648 53.62 L652 53.58 L656 53.54 L660 53.50 L664 53.46 L668 53.42 L672 53.38 L676 53.34 L680 53.30 L684 53.26 L688 53.22 L692 53.18 L696 53.14 L700 53.10 L704 53.06 L708 53.02 L712 52.98 L716 52.94 L720 52.90 L724 52.86 L728 52.82 L732 52.78 L736 52.74 L740 52.70 L744 52.66 L748 52.62" stroke="#12398f" stroke-width="1.1" fill="none"/><path d="M0 63.50 L4 63.31 L8 63.12 L12 62.95 L16 62.78 L20 62.63 L24 62.48 L28 62.35 L32 62.22 L36 62.09 L40 61.98 L44 61.87 L48 61.76 L52 61.67 L56 61.57 L60 61.49 L64 61.40 L68 61.32 L72 61.25 L76 61.18 L80 61.12 L84 61.05 L88 61.00 L92 60.94 L96 60.89 L100 60.84 L104 60.79 L108 60.75 L112 60.71 L116 60.67 L120 60.63 L124 60.60 L128 60.56 L132 60.53 L136 60.50 L140 60.47 L144 60.45 L148 60.42 L152 60.40 L156 60.38 L160 60.36 L164 60.34 L168 60.31 L172 60.30 L176 60.28 L180 60.26 L184 60.24 L188 60.22 L192 60.20 L196 60.18 L200 60.17 L204 60.15 L208 60.14 L212 60.12 L216 60.11 L220 60.10 L224 60.09 L228 60.07 L232 60.06 L236 60.05 L240 60.04 L244 60.02 L248 60.01 L252 59.99 L256 59.98 L260 59.96 L264 59.95 L268 59.93 L272 59.92 L276 59.90 L280 59.89 L284 59.87 L288 59.85 L292 59.82 L296 59.79 L300 59.74" stroke="#0b44a3" stroke-width="1.8" fill="none"/><path d="M300 59.74 L304 59.70 L308 59.64 L312 59.59 L316 59.54 L320 59.48 L324 59.43 L328 59.38 L332 59.33 L336 59.28 L340 59.23 L344 59.19 L348 59.14 L352 59.10 L356 59.07 L360 59.03 L364 59.00 L368 58.97 L372 58.94 L376 58.91 L380 58.89 L384 58.87 L388 58.85 L392 58.83 L396 58.82 L400 58.81 L404 58.79 L408 58.78 L412 58.78 L416 58.77 L420 58.76 L424 58.76 L428 58.76 L432 58.77 L436 58.78 L440 58.79 L444 58.81 L448 58.83 L452 58.86 L456 58.89 L460 58.92 L464 58.97 L468 59.01 L472 59.07 L476 59.13 L480 59.19 L484 59.26 L488 59.34 L492 59.42 L496 59.51 L500 59.59 L504 59.66 L508 59.73 L512 59.79 L516 59.83 L520 59.87 L524 59.90 L528 59.92 L532 59.94 L536 59.95 L540 59.96" stroke="#133d98" stroke-width="1.3" fill="none"/><path d="M540 59.96 L544 59.93 L548 59.90 L552 59.86 L556 59.83 L560 59.79 L564 59.76 L568 59.72 L572 59.68 L576 59.64 L580 59.60 L584 59.56 L588 59.52 L592 59.48 L596 59.44 L600 59.40 L604 59.36 L608 59.32 L612 59.28 L616 59.24 L620 59.20 L624 59.16 L628 59.12 L632 59.08 L636 59.04 L640 59.00 L644 58.96 L648 58.92 L652 58.88 L656 58.84 L660 58.80 L664 58.76 L668 58.72 L672 58.68 L676 58.64 L680 58.60 L684 58.56 L688 58.52 L692 58.48 L696 58.44 L700 58.40 L704 58.36 L708 58.32 L712 58.28 L716 58.24 L720 58.20 L724 58.16 L728 58.12 L732 58.08 L736 58.04 L740 58.00 L744 57.96 L748 57.92" stroke="#12398f" stroke-width="1.1" fill="none"/><path d="M0 68.80 L4 68.61 L8 68.42 L12 68.25 L16 68.08 L20 67.93 L24 67.78 L28 67.65 L32 67.52 L36 67.39 L40 67.28 L44 67.17 L48 67.06 L52 66.97 L56 66.87 L60 66.79 L64 66.70 L68 66.62 L72 66.55 L76 66.48 L80 66.42 L84 66.35 L88 66.30 L92 66.24 L96 66.19 L100 66.14 L104 66.09 L108 66.05 L112 66.01 L116 65.97 L120 65.93 L124 65.90 L128 65.86 L132 65.83 L136 65.80 L140 65.77 L144 65.75 L148 65.72 L152 65.70 L156 65.68 L160 65.65 L164 65.63 L168 65.61 L172 65.58 L176 65.56 L180 65.53 L184 65.50 L188 65.47 L192 65.44 L196 65.42 L200 65.39 L204 65.36 L208 65.34 L212 65.31 L216 65.29 L220 65.27 L224 65.24 L228 65.22 L232 65.20 L236 65.17 L240 65.14 L244 65.10 L248 65.07 L252 65.03 L256 64.98 L260 64.94 L264 64.90 L268 64.86 L272 64.82 L276 64.77 L280 64.73 L284 64.68 L288 64.61 L292 64.52 L296 64.41 L300 64.26" stroke="#0b44a3" stroke-width="1.8" fill="none"/><path d="M300 64.26 L304 64.09 L308 63.91 L312 63.72 L316 63.53 L320 63.35 L324 63.16 L328 62.98 L332 62.80 L336 62.63 L340 62.45 L344 62.29 L348 62.13 L352 61.99 L356 61.86 L360 61.75 L364 61.63 L368 61.53 L372 61.42 L376 61.32 L380 61.22 L384 61.14 L388 61.08 L392 61.02 L396 60.97 L400 60.93 L404 60.89 L408 60.85 L412 60.82 L416 60.79 L420 60.78 L424 60.77 L428 60.78 L432 60.79 L436 60.83 L440 60.88 L444 60.94 L448 61.02 L452 61.12 L456 61.23 L460 61.37 L464 61.52 L468 61.69 L472 61.89 L476 62.10 L480 62.34 L484 62.60 L488 62.88 L492 63.18 L496 63.49 L500 63.79 L504 64.07 L508 64.31 L512 64.51 L516 64.68 L520 64.82 L524 64.93 L528 65.01 L532 65.08 L536 65.12 L540 65.16" stroke="#133d98" stroke-width="1.3" fill="none"/><path d="M540 65.16 L544 65.15 L548 65.13 L552 65.12 L556 65.10 L560 65.08 L564 65.05 L568 65.02 L572 64.98 L576 64.94 L580 64.90 L584 64.86 L588 64.82 L592 64.78 L596 64.74 L600 64.70 L604 64.66 L608 64.62 L612 64.58 L616 64.54 L620 64.50 L624 64.46 L628 64.42 L632 64.38 L636 64.34 L640 64.30 L644 64.26 L648 64.22 L652 64.18 L656 64.14 L660 64.10 L664 64.06 L668 64.02 L672 63.98 L676 63.94 L680 63.90 L684 63.86 L688 63.82 L692 63.78 L696 63.74 L700 63.70 L704 63.66 L708 63.62 L712 63.58 L716 63.54 L720 63.50 L724 63.46 L728 63.42 L732 63.38 L736 63.34 L740 63.30 L744 63.26 L748 63.22" stroke="#12398f" stroke-width="1.1" fill="none"/><path d="M0 74.10 L4 73.91 L8 73.72 L12 73.55 L16 73.38 L20 73.23 L24 73.08 L28 72.95 L32 72.82 L36 72.69 L40 72.58 L44 72.47 L48 72.36 L52 72.27 L56 72.17 L60 72.09 L64 72.00 L68 71.92 L72 71.85 L76 71.78 L80 71.72 L84 71.65 L88 71.60 L92 71.54 L96 71.49 L100 71.44 L104 71.39 L108 71.35 L112 71.31 L116 71.27 L120 71.23 L124 71.20 L128 71.16 L132 71.13 L136 71.10 L140 71.07 L144 71.05 L148 71.02 L152 71.00 L156 70.98 L160 70.95 L164 70.93 L168 70.90 L172 70.87 L176 70.84 L180 70.80 L184 70.76 L188 70.72 L192 70.69 L196 70.65 L200 70.61 L204 70.58 L208 70.54 L212 70.51 L216 70.47 L220 70.44 L224 70.40 L228 70.37 L232 70.33 L236 70.29 L240 70.24 L244 70.19 L248 70.13 L252 70.06 L256 69.99 L260 69.92 L264 69.85 L268 69.79 L272 69.72 L276 69.65 L280 69.57 L284 69.49 L288 69.38 L292 69.23 L296 69.02 L300 68.77" stroke="#0b44a3" stroke-width="1.8" fill="none"/><path d="M300 68.77 L304 68.48 L308 68.17 L312 67.85 L316 67.53 L320 67.21 L324 66.90 L328 66.58 L332 66.28 L336 65.97 L340 65.67 L344 65.39 L348 65.12 L352 64.88 L356 64.66 L360 64.46 L364 64.27 L368 64.08 L372 63.90 L376 63.72 L380 63.56 L384 63.42 L388 63.30 L392 63.21 L396 63.13 L400 63.05 L404 62.98 L408 62.92 L412 62.86 L416 62.82 L420 62.79 L424 62.78 L428 62.79 L432 62.82 L436 62.88 L440 62.96 L444 63.07 L448 63.21 L452 63.38 L456 63.58 L460 63.81 L464 64.08 L468 64.37 L472 64.71 L476 65.08 L480 65.48 L484 65.93 L488 66.42 L492 66.94 L496 67.47 L500 68.00 L504 68.48 L508 68.89 L512 69.24 L516 69.53 L520 69.77 L524 69.96 L528 70.10 L532 70.21 L536 70.29 L540 70.35" stroke="#133d98" stroke-width="1.3" fill="none"/><path d="M540 70.35 L544 70.36 L548 70.37 L552 70.37 L556 70.37 L560 70.36 L564 70.34 L568 70.31 L572 70.28 L576 70.24 L580 70.20 L584 70.16 L588 70.12 L592 70.08 L596 70.04 L600 70.00 L604 69.96 L608 69.92 L612 69.88 L616 69.84 L620 69.80 L624 69.76 L628 69.72 L632 69.68 L636 69.64 L640 69.60 L644 69.56 L648 69.52 L652 69.48 L656 69.44 L660 69.40 L664 69.36 L668 69.32 L672 69.28 L676 69.24 L680 69.20 L684 69.16 L688 69.12 L692 69.08 L696 69.04 L700 69.00 L704 68.96 L708 68.92 L712 68.88 L716 68.84 L720 68.80 L724 68.76 L728 68.72 L732 68.68 L736 68.64 L740 68.60 L744 68.56 L748 68.52" stroke="#12398f" stroke-width="1.1" fill="none"/><clipPath id="cb"><path d="M300 58 L300 8.84 L304 10.98 L308 13.16 L312 15.29 L316 17.26 L320 19.03 L324 20.70 L328 22.33 L332 23.91 L336 25.39 L340 26.82 L344 28.21 L348 29.50 L352 30.59 L356 31.53 L360 32.42 L364 33.30 L368 34.18 L372 35.06 L376 35.94 L380 36.77 L384 37.48 L388 37.97 L392 38.33 L396 38.65 L400 38.97 L404 39.29 L408 39.61 L412 39.91 L416 40.16 L420 40.28 L424 40.26 L428 40.17 L432 40.05 L436 39.82 L440 39.42 L444 38.91 L448 38.34 L452 37.64 L456 36.70 L460 35.55 L464 34.32 L468 32.97 L472 31.40 L476 29.58 L480 27.66 L484 25.66 L488 23.44 L492 20.88 L496 18.10 L500 15.29 L504 12.58 L508 10.10 L512 7.93 L516 6.33 L520 5.53 L524 5.23 L528 5.10 L532 5.03 L536 5.00 L540 5.00 L544 5.00 L548 5.00 L552 5.00 L556 5.00 L560 5.00 L564 5.00 L568 5.00 L572 5.00 L576 5.00 L580 5.00 L584 5.00 L588 5.00 L592 5.00 L596 5.00 L600 5.00 L604 5.00 L608 5.00 L612 5.00 L616 5.00 L620 5.00 L624 5.00 L628 5.00 L632 5.00 L636 5.00 L640 5.00 L644 5.00 L648 5.00 L652 5.00 L656 5.00 L660 5.00 L664 5.00 L668 5.00 L672 5.00 L676 5.00 L680 5.00 L684 5.00 L688 5.00 L692 5.00 L696 5.00 L700 5.00 L704 5.00 L708 5.00 L712 5.00 L716 5.00 L720 5.00 L724 5.00 L728 5.00 L732 5.00 L736 5.00 L740 5.00 L744 5.00 L748 5.00 L750 58 Z"/></clipPath><linearGradient id="fg" x1="300" y1="0" x2="430" y2="0" gradientUnits="userSpaceOnUse"><stop offset="0" stop-color="#fff" stop-opacity="0"/><stop offset="1" stop-color="#fff" stop-opacity="1"/></linearGradient><mask id="mk" maskUnits="userSpaceOnUse" x="0" y="0" width="750" height="58"><rect x="0" y="0" width="750" height="58" fill="url(#fg)"/></mask><g clip-path="url(#cb)" mask="url(#mk)" stroke="#13398f" stroke-width="1.15" fill="none"><path d="M100.0 62.00 L103.0 60.20 L106.0 58.40 L109.0 56.60 L112.0 54.80 L115.0 53.00 L118.0 51.20 L121.0 49.40 L124.0 47.60 L127.0 45.80 L130.0 44.00 L133.0 42.20 L136.0 40.40 L139.0 38.60 L142.0 36.80 L145.0 35.00 L148.0 33.20 L151.0 31.40 L154.0 29.60 L157.0 27.80 L160.0 26.00 L163.0 24.20 L166.0 22.40 L169.0 20.60 L172.0 18.80 L175.0 17.00 L178.0 15.20 L181.0 13.40 L184.0 11.60 L187.0 9.80 L190.0 8.00 L193.0 6.20 L196.0 4.40 L199.0 2.60 L202.0 0.80 L205.0 -1.00 L208.0 -2.80 L211.0 -4.60"/><path d="M110.0 62.00 L113.0 60.20 L116.0 58.40 L119.0 56.60 L122.0 54.80 L125.0 53.00 L128.0 51.20 L131.0 49.40 L134.0 47.60 L137.0 45.80 L140.0 44.00 L143.0 42.20 L146.0 40.40 L149.0 38.60 L152.0 36.80 L155.0 35.00 L158.0 33.20 L161.0 31.40 L164.0 29.60 L167.0 27.80 L170.0 26.00 L173.0 24.20 L176.0 22.40 L179.0 20.60 L182.0 18.80 L185.0 17.00 L188.0 15.20 L191.0 13.40 L194.0 11.60 L197.0 9.80 L200.0 8.00 L203.0 6.20 L206.0 4.40 L209.0 2.60 L212.0 0.80 L215.0 -1.00 L218.0 -2.80 L221.0 -4.60"/><path d="M120.0 62.00 L123.0 60.20 L126.0 58.40 L129.0 56.60 L132.0 54.80 L135.0 53.00 L138.0 51.20 L141.0 49.40 L144.0 47.60 L147.0 45.80 L150.0 44.00 L153.0 42.20 L156.0 40.40 L159.0 38.60 L162.0 36.80 L165.0 35.00 L168.0 33.20 L171.0 31.40 L174.0 29.60 L177.0 27.80 L180.0 26.00 L183.0 24.20 L186.0 22.40 L189.0 20.60 L192.0 18.80 L195.0 17.00 L198.0 15.20 L201.0 13.40 L204.0 11.60 L207.0 9.80 L210.0 8.00 L213.0 6.20 L216.0 4.40 L219.0 2.60 L222.0 0.80 L225.0 -1.00 L228.0 -2.80 L231.0 -4.60"/><path d="M130.0 62.00 L133.0 60.20 L136.0 58.40 L139.0 56.60 L142.0 54.80 L145.0 53.00 L148.0 51.20 L151.0 49.40 L154.0 47.60 L157.0 45.80 L160.0 44.00 L163.0 42.20 L166.0 40.40 L169.0 38.60 L172.0 36.80 L175.0 35.00 L178.0 33.20 L181.0 31.40 L184.0 29.60 L187.0 27.80 L190.0 26.00 L193.0 24.20 L196.0 22.40 L199.0 20.60 L202.0 18.80 L205.0 17.00 L208.0 15.20 L211.0 13.40 L214.0 11.60 L217.0 9.80 L220.0 8.00 L223.0 6.20 L226.0 4.40 L229.0 2.60 L232.0 0.80 L235.0 -1.00 L238.0 -2.80 L241.0 -4.60"/><path d="M140.0 62.00 L143.0 60.20 L146.0 58.40 L149.0 56.60 L152.0 54.80 L155.0 53.00 L158.0 51.20 L161.0 49.40 L164.0 47.60 L167.0 45.80 L170.0 44.00 L173.0 42.20 L176.0 40.40 L179.0 38.60 L182.0 36.80 L185.0 35.00 L188.0 33.20 L191.0 31.40 L194.0 29.60 L197.0 27.80 L200.0 26.00 L203.0 24.20 L206.0 22.40 L209.0 20.60 L212.0 18.80 L215.0 17.00 L218.0 15.20 L221.0 13.40 L224.0 11.60 L227.0 9.80 L230.0 8.00 L233.0 6.20 L236.0 4.40 L239.0 2.60 L242.0 0.80 L245.0 -1.00 L248.0 -2.80 L251.0 -4.60"/><path d="M150.0 62.00 L153.0 60.20 L156.0 58.40 L159.0 56.60 L162.0 54.80 L165.0 53.00 L168.0 51.20 L171.0 49.40 L174.0 47.60 L177.0 45.80 L180.0 44.00 L183.0 42.20 L186.0 40.40 L189.0 38.60 L192.0 36.80 L195.0 35.00 L198.0 33.20 L201.0 31.40 L204.0 29.60 L207.0 27.80 L210.0 26.00 L213.0 24.20 L216.0 22.40 L219.0 20.60 L222.0 18.80 L225.0 17.00 L228.0 15.20 L231.0 13.40 L234.0 11.60 L237.0 9.80 L240.0 8.00 L243.0 6.20 L246.0 4.40 L249.0 2.60 L252.0 0.80 L255.0 -1.00 L258.0 -2.80 L261.0 -4.60"/><path d="M160.0 62.00 L163.0 60.20 L166.0 58.40 L169.0 56.60 L172.0 54.80 L175.0 53.00 L178.0 51.20 L181.0 49.40 L184.0 47.60 L187.0 45.80 L190.0 44.00 L193.0 42.20 L196.0 40.40 L199.0 38.60 L202.0 36.80 L205.0 35.00 L208.0 33.20 L211.0 31.40 L214.0 29.60 L217.0 27.80 L220.0 26.00 L223.0 24.20 L226.0 22.40 L229.0 20.60 L232.0 18.80 L235.0 17.00 L238.0 15.20 L241.0 13.40 L244.0 11.60 L247.0 9.80 L250.0 8.00 L253.0 6.20 L256.0 4.40 L259.0 2.60 L262.0 0.80 L265.0 -1.00 L268.0 -2.80 L271.0 -4.60"/><path d="M170.0 62.00 L173.0 60.20 L176.0 58.40 L179.0 56.60 L182.0 54.80 L185.0 53.00 L188.0 51.20 L191.0 49.40 L194.0 47.60 L197.0 45.80 L200.0 44.00 L203.0 42.20 L206.0 40.40 L209.0 38.60 L212.0 36.80 L215.0 35.00 L218.0 33.20 L221.0 31.40 L224.0 29.60 L227.0 27.80 L230.0 26.00 L233.0 24.20 L236.0 22.40 L239.0 20.60 L242.0 18.80 L245.0 17.00 L248.0 15.20 L251.0 13.40 L254.0 11.60 L257.0 9.80 L260.0 8.00 L263.0 6.20 L266.0 4.40 L269.0 2.60 L272.0 0.80 L275.0 -1.00 L278.0 -2.80 L281.0 -4.60"/><path d="M180.0 62.00 L183.0 60.20 L186.0 58.40 L189.0 56.60 L192.0 54.80 L195.0 53.00 L198.0 51.20 L201.0 49.40 L204.0 47.60 L207.0 45.80 L210.0 44.00 L213.0 42.20 L216.0 40.40 L219.0 38.60 L222.0 36.80 L225.0 35.00 L228.0 33.20 L231.0 31.40 L234.0 29.60 L237.0 27.80 L240.0 26.00 L243.0 24.20 L246.0 22.40 L249.0 20.60 L252.0 18.80 L255.0 17.00 L258.0 15.20 L261.0 13.40 L264.0 11.60 L267.0 9.80 L270.0 8.00 L273.0 6.20 L276.0 4.40 L279.0 2.60 L282.0 0.80 L285.0 -1.00 L288.0 -2.80 L291.0 -4.60"/><path d="M190.0 62.00 L193.0 60.20 L196.0 58.40 L199.0 56.60 L202.0 54.80 L205.0 53.00 L208.0 51.20 L211.0 49.40 L214.0 47.60 L217.0 45.80 L220.0 44.00 L223.0 42.20 L226.0 40.40 L229.0 38.60 L232.0 36.80 L235.0 35.00 L238.0 33.20 L241.0 31.40 L244.0 29.60 L247.0 27.80 L250.0 26.00 L253.0 24.20 L256.0 22.40 L259.0 20.60 L262.0 18.80 L265.0 17.00 L268.0 15.20 L271.0 13.40 L274.0 11.60 L277.0 9.80 L280.0 8.00 L283.0 6.20 L286.0 4.40 L289.0 2.60 L292.0 0.80 L295.0 -1.00 L298.0 -2.80 L301.0 -4.60"/><path d="M200.0 62.00 L203.0 60.20 L206.0 58.40 L209.0 56.60 L212.0 54.80 L215.0 53.00 L218.0 51.20 L221.0 49.40 L224.0 47.60 L227.0 45.80 L230.0 44.00 L233.0 42.20 L236.0 40.40 L239.0 38.60 L242.0 36.80 L245.0 35.00 L248.0 33.20 L251.0 31.40 L254.0 29.60 L257.0 27.80 L260.0 26.00 L263.0 24.20 L266.0 22.40 L269.0 20.60 L272.0 18.80 L275.0 17.00 L278.0 15.20 L281.0 13.40 L284.0 11.60 L287.0 9.80 L290.0 8.00 L293.0 6.20 L296.0 4.40 L299.0 2.60 L302.0 0.80 L305.0 -1.00 L308.0 -2.80 L311.0 -4.60"/><path d="M210.0 62.00 L213.0 60.20 L216.0 58.40 L219.0 56.60 L222.0 54.80 L225.0 53.00 L228.0 51.20 L231.0 49.40 L234.0 47.60 L237.0 45.80 L240.0 44.00 L243.0 42.20 L246.0 40.40 L249.0 38.60 L252.0 36.80 L255.0 35.00 L258.0 33.20 L261.0 31.40 L264.0 29.60 L267.0 27.80 L270.0 26.00 L273.0 24.20 L276.0 22.40 L279.0 20.60 L282.0 18.80 L285.0 17.00 L288.0 15.20 L291.0 13.40 L294.0 11.60 L297.0 9.80 L300.0 8.00 L303.0 6.20 L306.0 4.40 L309.0 2.60 L312.0 0.80 L315.0 -1.00 L318.0 -2.80 L321.0 -4.60"/><path d="M220.0 62.00 L223.0 60.20 L226.0 58.40 L229.0 56.60 L232.0 54.80 L235.0 53.00 L238.0 51.20 L241.0 49.40 L244.0 47.60 L247.0 45.80 L250.0 44.00 L253.0 42.20 L256.0 40.40 L259.0 38.60 L262.0 36.80 L265.0 35.00 L268.0 33.20 L271.0 31.40 L274.0 29.60 L277.0 27.80 L280.0 26.00 L283.0 24.20 L286.0 22.40 L289.0 20.60 L292.0 18.80 L295.0 17.00 L298.0 15.20 L301.0 13.40 L304.0 11.60 L307.0 9.80 L310.0 8.00 L313.0 6.20 L316.0 4.40 L319.0 2.60 L322.0 0.80 L325.0 -1.00 L328.0 -2.80 L331.0 -4.60"/><path d="M230.0 62.00 L233.0 60.20 L236.0 58.40 L239.0 56.60 L242.0 54.80 L245.0 53.00 L248.0 51.20 L251.0 49.40 L254.0 47.60 L257.0 45.80 L260.0 44.00 L263.0 42.20 L266.0 40.40 L269.0 38.60 L272.0 36.80 L275.0 35.00 L278.0 33.20 L281.0 31.40 L284.0 29.60 L287.0 27.80 L290.0 26.00 L293.0 24.20 L296.0 22.40 L299.0 20.60 L302.0 18.80 L305.0 17.00 L308.0 15.20 L311.0 13.40 L314.0 11.60 L317.0 9.80 L320.0 8.00 L323.0 6.20 L326.0 4.40 L329.0 2.60 L332.0 0.80 L335.0 -1.00 L338.0 -2.80 L341.0 -4.60"/><path d="M240.0 62.00 L243.0 60.20 L246.0 58.40 L249.0 56.60 L252.0 54.80 L255.0 53.00 L258.0 51.20 L261.0 49.40 L264.0 47.60 L267.0 45.80 L270.0 44.00 L273.0 42.20 L276.0 40.40 L279.0 38.60 L282.0 36.80 L285.0 35.00 L288.0 33.20 L291.0 31.40 L294.0 29.60 L297.0 27.80 L300.0 26.00 L303.0 24.20 L306.0 22.40 L309.0 20.60 L312.0 18.80 L315.0 17.00 L318.0 15.20 L321.0 13.40 L324.0 11.60 L327.0 9.80 L330.0 8.00 L333.0 6.20 L336.0 4.40 L339.0 2.60 L342.0 0.80 L345.0 -1.00 L348.0 -2.80 L351.0 -4.60"/><path d="M250.0 62.00 L253.0 60.20 L256.0 58.40 L259.0 56.60 L262.0 54.80 L265.0 53.00 L268.0 51.20 L271.0 49.40 L274.0 47.60 L277.0 45.80 L280.0 44.00 L283.0 42.20 L286.0 40.40 L289.0 38.60 L292.0 36.80 L295.0 35.00 L298.0 33.20 L301.0 31.40 L304.0 29.60 L307.0 27.80 L310.0 26.00 L313.0 24.20 L316.0 22.40 L319.0 20.60 L322.0 18.80 L325.0 17.00 L328.0 15.20 L331.0 13.40 L334.0 11.60 L337.0 9.80 L340.0 8.00 L343.0 6.20 L346.0 4.40 L349.0 2.60 L352.0 0.80 L355.0 -1.00 L358.0 -2.80 L361.0 -4.60"/><path d="M260.0 62.00 L263.0 60.20 L266.0 58.40 L269.0 56.60 L272.0 54.80 L275.0 53.00 L278.0 51.20 L281.0 49.40 L284.0 47.60 L287.0 45.80 L290.0 44.00 L293.0 42.20 L296.0 40.40 L299.0 38.60 L302.0 36.80 L305.0 35.00 L308.0 33.20 L311.0 31.40 L314.0 29.60 L317.0 27.80 L320.0 26.00 L323.0 24.20 L326.0 22.40 L329.0 20.60 L332.0 18.80 L335.0 17.00 L338.0 15.20 L341.0 13.40 L344.0 11.60 L347.0 9.80 L350.0 8.00 L353.0 6.20 L356.0 4.40 L359.0 2.60 L362.0 0.80 L365.0 -1.00 L368.0 -2.80 L371.0 -4.60"/><path d="M270.0 62.00 L273.0 60.20 L276.0 58.40 L279.0 56.60 L282.0 54.80 L285.0 53.00 L288.0 51.20 L291.0 49.40 L294.0 47.60 L297.0 45.80 L300.0 44.00 L303.0 42.20 L306.0 40.40 L309.0 38.60 L312.0 36.80 L315.0 35.00 L318.0 33.20 L321.0 31.40 L324.0 29.60 L327.0 27.80 L330.0 26.00 L333.0 24.20 L336.0 22.40 L339.0 20.60 L342.0 18.80 L345.0 17.00 L348.0 15.20 L351.0 13.40 L354.0 11.60 L357.0 9.80 L360.0 8.00 L363.0 6.20 L366.0 4.40 L369.0 2.60 L372.0 0.80 L375.0 -1.00 L378.0 -2.80 L381.0 -4.60"/><path d="M280.0 62.00 L283.0 60.20 L286.0 58.40 L289.0 56.60 L292.0 54.80 L295.0 53.00 L298.0 51.20 L301.0 49.40 L304.0 47.60 L307.0 45.80 L310.0 44.00 L313.0 42.20 L316.0 40.40 L319.0 38.60 L322.0 36.80 L325.0 35.00 L328.0 33.20 L331.0 31.40 L334.0 29.60 L337.0 27.80 L340.0 26.00 L343.0 24.20 L346.0 22.40 L349.0 20.60 L352.0 18.80 L355.0 17.00 L358.0 15.20 L361.0 13.40 L364.0 11.60 L367.0 9.80 L370.0 8.00 L373.0 6.20 L376.0 4.40 L379.0 2.60 L382.0 0.80 L385.0 -1.00 L388.0 -2.80 L391.0 -4.60"/><path d="M290.0 62.00 L293.0 60.20 L296.0 58.40 L299.0 56.60 L302.0 54.80 L305.0 53.00 L308.0 51.20 L311.0 49.40 L314.0 47.60 L317.0 45.80 L320.0 44.00 L323.0 42.20 L326.0 40.40 L329.0 38.60 L332.0 36.80 L335.0 35.00 L338.0 33.20 L341.0 31.40 L344.0 29.60 L347.0 27.80 L350.0 26.00 L353.0 24.20 L356.0 22.40 L359.0 20.60 L362.0 18.80 L365.0 17.00 L368.0 15.20 L371.0 13.40 L374.0 11.60 L377.0 9.80 L380.0 8.00 L383.0 6.20 L386.0 4.40 L389.0 2.60 L392.0 0.80 L395.0 -1.00 L398.0 -2.80 L401.0 -4.60"/><path d="M300.0 62.00 L303.0 60.20 L306.0 58.40 L309.0 56.60 L312.0 54.80 L315.0 53.00 L318.0 51.20 L321.0 49.40 L324.0 47.60 L327.0 45.80 L330.0 44.00 L333.0 42.20 L336.0 40.40 L339.0 38.60 L342.0 36.80 L345.0 35.00 L348.0 33.20 L351.0 31.40 L354.0 29.60 L357.0 27.80 L360.0 26.00 L363.0 24.20 L366.0 22.40 L369.0 20.60 L372.0 18.80 L375.0 17.00 L378.0 15.20 L381.0 13.40 L384.0 11.60 L387.0 9.80 L390.0 8.00 L393.0 6.20 L396.0 4.40 L399.0 2.60 L402.0 0.80 L405.0 -1.00 L408.0 -2.80 L411.0 -4.60"/><path d="M310.0 62.00 L313.0 60.20 L316.0 58.40 L319.0 56.60 L322.0 54.80 L325.0 53.00 L328.0 51.20 L331.0 49.40 L334.0 47.60 L337.0 45.80 L340.0 44.00 L343.0 42.20 L346.0 40.40 L349.0 38.60 L352.0 36.80 L355.0 35.00 L358.0 33.20 L361.0 31.40 L364.0 29.60 L367.0 27.80 L370.0 26.00 L373.0 24.20 L376.0 22.40 L379.0 20.60 L382.0 18.80 L385.0 17.00 L388.0 15.20 L391.0 13.40 L394.0 11.60 L397.0 9.80 L400.0 8.00 L403.0 6.20 L406.0 4.40 L409.0 2.60 L412.0 0.80 L415.0 -1.00 L418.0 -2.80 L421.0 -4.60"/><path d="M320.0 62.00 L323.0 60.20 L326.0 58.40 L329.0 56.60 L332.0 54.80 L335.0 53.00 L338.0 51.20 L341.0 49.40 L344.0 47.60 L347.0 45.80 L350.0 44.00 L353.0 42.20 L356.0 40.40 L359.0 38.60 L362.0 36.80 L365.0 35.00 L368.0 33.20 L371.0 31.40 L374.0 29.60 L377.0 27.80 L380.0 26.00 L383.0 24.20 L386.0 22.40 L389.0 20.60 L392.0 18.80 L395.0 17.00 L398.0 15.20 L401.0 13.40 L404.0 11.60 L407.0 9.80 L410.0 8.00 L413.0 6.20 L416.0 4.40 L419.0 2.60 L422.0 0.80 L425.0 -1.00 L428.0 -2.80 L431.0 -4.60"/><path d="M330.0 62.00 L333.0 60.20 L336.0 58.40 L339.0 56.60 L342.0 54.80 L345.0 53.00 L348.0 51.20 L351.0 49.40 L354.0 47.60 L357.0 45.80 L360.0 44.00 L363.0 42.20 L366.0 40.40 L369.0 38.60 L372.0 36.80 L375.0 35.00 L378.0 33.20 L381.0 31.40 L384.0 29.60 L387.0 27.80 L390.0 26.00 L393.0 24.20 L396.0 22.40 L399.0 20.60 L402.0 18.80 L405.0 17.00 L408.0 15.20 L411.0 13.40 L414.0 11.60 L417.0 9.80 L420.0 8.00 L423.0 6.20 L426.0 4.40 L429.0 2.60 L432.0 0.80 L435.0 -1.00 L438.0 -2.80 L441.0 -4.60"/><path d="M340.0 62.00 L343.0 60.20 L346.0 58.40 L349.0 56.60 L352.0 54.80 L355.0 53.00 L358.0 51.20 L361.0 49.40 L364.0 47.60 L367.0 45.80 L370.0 44.00 L373.0 42.20 L376.0 40.40 L379.0 38.60 L382.0 36.80 L385.0 35.00 L388.0 33.20 L391.0 31.40 L394.0 29.60 L397.0 27.80 L400.0 26.00 L403.0 24.20 L406.0 22.40 L409.0 20.60 L412.0 18.80 L415.0 17.00 L418.0 15.20 L421.0 13.40 L424.0 11.60 L427.0 9.80 L430.0 8.00 L433.0 6.20 L436.0 4.40 L439.0 2.60 L442.0 0.80 L445.0 -1.00 L448.0 -2.80 L451.0 -4.60"/><path d="M350.0 62.00 L353.0 60.20 L356.0 58.40 L359.0 56.60 L362.0 54.80 L365.0 53.00 L368.0 51.20 L371.0 49.40 L374.0 47.60 L377.0 45.80 L380.0 44.00 L383.0 42.20 L386.0 40.40 L389.0 38.60 L392.0 36.80 L395.0 35.00 L398.0 33.20 L401.0 31.40 L404.0 29.60 L407.0 27.80 L410.0 26.00 L413.0 24.20 L416.0 22.40 L419.0 20.60 L422.0 18.80 L425.0 17.00 L428.0 15.20 L431.0 13.40 L434.0 11.60 L437.0 9.80 L440.0 8.00 L443.0 6.20 L446.0 4.40 L449.0 2.60 L452.0 0.80 L455.0 -1.00 L458.0 -2.80 L461.0 -4.60"/><path d="M360.0 62.00 L363.0 60.20 L366.0 58.40 L369.0 56.60 L372.0 54.80 L375.0 53.00 L378.0 51.20 L381.0 49.40 L384.0 47.60 L387.0 45.80 L390.0 44.00 L393.0 42.20 L396.0 40.40 L399.0 38.60 L402.0 36.80 L405.0 35.00 L408.0 33.20 L411.0 31.40 L414.0 29.60 L417.0 27.80 L420.0 26.00 L423.0 24.20 L426.0 22.40 L429.0 20.60 L432.0 18.80 L435.0 17.00 L438.0 15.20 L441.0 13.40 L444.0 11.60 L447.0 9.80 L450.0 8.00 L453.0 6.20 L456.0 4.40 L459.0 2.60 L462.0 0.80 L465.0 -1.00 L468.0 -2.80 L471.0 -4.60"/><path d="M370.0 62.00 L373.0 60.20 L376.0 58.40 L379.0 56.60 L382.0 54.80 L385.0 53.00 L388.0 51.20 L391.0 49.40 L394.0 47.60 L397.0 45.80 L400.0 44.00 L403.0 42.20 L406.0 40.40 L409.0 38.60 L412.0 36.80 L415.0 35.00 L418.0 33.20 L421.0 31.40 L424.0 29.60 L427.0 27.80 L430.0 26.00 L433.0 24.20 L436.0 22.40 L439.0 20.60 L442.0 18.80 L445.0 17.00 L448.0 15.20 L451.0 13.40 L454.0 11.60 L457.0 9.80 L460.0 8.00 L463.0 6.20 L466.0 4.40 L469.0 2.60 L472.0 0.80 L475.0 -1.03 L478.0 -2.92 L481.0 -4.86"/><path d="M380.0 62.00 L383.0 60.20 L386.0 58.40 L389.0 56.60 L392.0 54.80 L395.0 53.00 L398.0 51.20 L401.0 49.40 L404.0 47.60 L407.0 45.80 L410.0 44.00 L413.0 42.20 L416.0 40.40 L419.0 38.60 L422.0 36.80 L425.0 35.00 L428.0 33.20 L431.0 31.40 L434.0 29.60 L437.0 27.80 L440.0 26.00 L443.0 24.20 L446.0 22.40 L449.0 20.60 L452.0 18.80 L455.0 17.00 L458.0 15.20 L461.0 13.40 L464.0 11.60 L467.0 9.80 L470.0 8.00 L473.0 6.20 L476.0 4.35 L479.0 2.44 L482.0 0.49 L485.0 -1.52 L488.0 -3.59 L491.0 -5.70"/><path d="M390.0 62.00 L393.0 60.20 L396.0 58.40 L399.0 56.60 L402.0 54.80 L405.0 53.00 L408.0 51.20 L411.0 49.40 L414.0 47.60 L417.0 45.80 L420.0 44.00 L423.0 42.20 L426.0 40.40 L429.0 38.60 L432.0 36.80 L435.0 35.00 L438.0 33.20 L441.0 31.40 L444.0 29.60 L447.0 27.80 L450.0 26.00 L453.0 24.20 L456.0 22.40 L459.0 20.60 L462.0 18.80 L465.0 17.00 L468.0 15.20 L471.0 13.40 L474.0 11.58 L477.0 9.71 L480.0 7.79 L483.0 5.82 L486.0 3.79 L489.0 1.71 L492.0 -0.42 L495.0 -2.61 L498.0 -4.85"/><path d="M400.0 62.00 L403.0 60.20 L406.0 58.40 L409.0 56.60 L412.0 54.80 L415.0 53.00 L418.0 51.20 L421.0 49.40 L424.0 47.60 L427.0 45.80 L430.0 44.00 L433.0 42.20 L436.0 40.40 L439.0 38.60 L442.0 36.80 L445.0 35.00 L448.0 33.20 L451.0 31.40 L454.0 29.60 L457.0 27.80 L460.0 26.00 L463.0 24.20 L466.0 22.40 L469.0 20.60 L472.0 18.80 L475.0 16.97 L478.0 15.08 L481.0 13.14 L484.0 11.15 L487.0 9.10 L490.0 7.00 L493.0 4.85 L496.0 2.65 L499.0 0.40 L502.0 -1.91 L505.0 -4.27"/><path d="M410.0 62.00 L413.0 60.20 L416.0 58.40 L419.0 56.60 L422.0 54.80 L425.0 53.00 L428.0 51.20 L431.0 49.40 L434.0 47.60 L437.0 45.80 L440.0 44.00 L443.0 42.20 L446.0 40.40 L449.0 38.60 L452.0 36.80 L455.0 35.00 L458.0 33.20 L461.0 31.40 L464.0 29.60 L467.0 27.80 L470.0 26.00 L473.0 24.20 L476.0 22.35 L479.0 20.44 L482.0 18.49 L485.0 16.48 L488.0 14.41 L491.0 12.30 L494.0 10.13 L497.0 7.91 L500.0 5.64 L503.0 3.31 L506.0 0.94 L509.0 -1.49 L512.0 -3.98 L515.0 -6.51"/><path d="M420.0 62.00 L423.0 60.20 L426.0 58.40 L429.0 56.60 L432.0 54.80 L435.0 53.00 L438.0 51.20 L441.0 49.40 L444.0 47.60 L447.0 45.80 L450.0 44.00 L453.0 42.20 L456.0 40.40 L459.0 38.60 L462.0 36.80 L465.0 35.00 L468.0 33.20 L471.0 31.40 L474.0 29.58 L477.0 27.71 L480.0 25.79 L483.0 23.82 L486.0 21.79 L489.0 19.71 L492.0 17.58 L495.0 15.39 L498.0 13.15 L501.0 10.86 L504.0 8.52 L507.0 6.13 L510.0 3.68 L513.0 1.18 L516.0 -1.37 L519.0 -3.98 L522.0 -6.64"/><path d="M430.0 62.00 L433.0 60.20 L436.0 58.40 L439.0 56.60 L442.0 54.80 L445.0 53.00 L448.0 51.20 L451.0 49.40 L454.0 47.60 L457.0 45.80 L460.0 44.00 L463.0 42.20 L466.0 40.40 L469.0 38.60 L472.0 36.80 L475.0 34.97 L478.0 33.08 L481.0 31.14 L484.0 29.15 L487.0 27.10 L490.0 25.00 L493.0 22.85 L496.0 20.65 L499.0 18.40 L502.0 16.09 L505.0 13.73 L508.0 11.32 L511.0 8.85 L514.0 6.33 L517.0 3.76 L520.0 1.14 L523.0 -1.53 L526.0 -4.26"/><path d="M440.0 62.00 L443.0 60.20 L446.0 58.40 L449.0 56.60 L452.0 54.80 L455.0 53.00 L458.0 51.20 L461.0 49.40 L464.0 47.60 L467.0 45.80 L470.0 44.00 L473.0 42.20 L476.0 40.35 L479.0 38.44 L482.0 36.49 L485.0 34.48 L488.0 32.41 L491.0 30.30 L494.0 28.13 L497.0 25.91 L500.0 23.64 L503.0 21.31 L506.0 18.94 L509.0 16.51 L512.0 14.02 L515.0 11.49 L518.0 8.90 L521.0 6.26 L524.0 3.57 L527.0 0.82 L530.0 -1.97 L533.0 -4.82"/><path d="M450.0 62.00 L453.0 60.20 L456.0 58.40 L459.0 56.60 L462.0 54.80 L465.0 53.00 L468.0 51.20 L471.0 49.40 L474.0 47.58 L477.0 45.71 L480.0 43.79 L483.0 41.82 L486.0 39.79 L489.0 37.71 L492.0 35.58 L495.0 33.39 L498.0 31.15 L501.0 28.86 L504.0 26.52 L507.0 24.13 L510.0 21.68 L513.0 19.18 L516.0 16.63 L519.0 14.02 L522.0 11.36 L525.0 8.65 L528.0 5.89 L531.0 3.08 L534.0 0.23 L537.0 -2.62 L540.0 -5.47"/><path d="M460.0 62.00 L463.0 60.20 L466.0 58.40 L469.0 56.60 L472.0 54.80 L475.0 52.97 L478.0 51.08 L481.0 49.14 L484.0 47.15 L487.0 45.10 L490.0 43.00 L493.0 40.85 L496.0 38.65 L499.0 36.40 L502.0 34.09 L505.0 31.73 L508.0 29.32 L511.0 26.85 L514.0 24.33 L517.0 21.76 L520.0 19.14 L523.0 16.47 L526.0 13.74 L529.0 10.96 L532.0 8.13 L535.0 5.28 L538.0 2.43 L541.0 -0.42 L544.0 -3.27 L547.0 -6.12"/><path d="M470.0 62.00 L473.0 60.20 L476.0 58.35 L479.0 56.44 L482.0 54.48 L485.0 52.48 L488.0 50.41 L491.0 48.30 L494.0 46.13 L497.0 43.91 L500.0 41.64 L503.0 39.31 L506.0 36.94 L509.0 34.51 L512.0 32.02 L515.0 29.49 L518.0 26.90 L521.0 24.26 L524.0 21.57 L527.0 18.82 L530.0 16.03 L533.0 13.18 L536.0 10.33 L539.0 7.48 L542.0 4.63 L545.0 1.78 L548.0 -1.07 L551.0 -3.92 L554.0 -6.77"/><path d="M480.0 62.00 L483.0 60.02 L486.0 58.00 L489.0 55.92 L492.0 53.79 L495.0 51.60 L498.0 49.36 L501.0 47.07 L504.0 44.73 L507.0 42.34 L510.0 39.89 L513.0 37.39 L516.0 34.84 L519.0 32.23 L522.0 29.57 L525.0 26.86 L528.0 24.10 L531.0 21.29 L534.0 18.44 L537.0 15.59 L540.0 12.74 L543.0 9.89 L546.0 7.04 L549.0 4.19 L552.0 1.34 L555.0 -1.51 L558.0 -4.36"/><path d="M490.0 62.00 L493.0 59.85 L496.0 57.65 L499.0 55.39 L502.0 53.09 L505.0 50.73 L508.0 48.31 L511.0 45.85 L514.0 43.33 L517.0 40.76 L520.0 38.14 L523.0 35.46 L526.0 32.73 L529.0 29.95 L532.0 27.12 L535.0 24.27 L538.0 21.42 L541.0 18.57 L544.0 15.72 L547.0 12.87 L550.0 10.02 L553.0 7.17 L556.0 4.32 L559.0 1.47 L562.0 -1.38 L565.0 -4.23"/><path d="M500.0 62.00 L503.0 59.67 L506.0 57.30 L509.0 54.87 L512.0 52.38 L515.0 49.85 L518.0 47.26 L521.0 44.62 L524.0 41.93 L527.0 39.18 L530.0 36.39 L533.0 33.54 L536.0 30.69 L539.0 27.84 L542.0 24.99 L545.0 22.14 L548.0 19.29 L551.0 16.44 L554.0 13.59 L557.0 10.74 L560.0 7.89 L563.0 5.04 L566.0 2.19 L569.0 -0.66 L572.0 -3.51 L575.0 -6.36"/><path d="M510.0 62.00 L513.0 59.50 L516.0 56.95 L519.0 54.34 L522.0 51.69 L525.0 48.98 L528.0 46.21 L531.0 43.40 L534.0 40.55 L537.0 37.70 L540.0 34.85 L543.0 32.00 L546.0 29.15 L549.0 26.30 L552.0 23.45 L555.0 20.60 L558.0 17.75 L561.0 14.90 L564.0 12.05 L567.0 9.20 L570.0 6.35 L573.0 3.50 L576.0 0.65 L579.0 -2.20 L582.0 -5.05"/><path d="M520.0 62.00 L523.0 59.33 L526.0 56.60 L529.0 53.82 L532.0 50.98 L535.0 48.13 L538.0 45.28 L541.0 42.43 L544.0 39.58 L547.0 36.73 L550.0 33.88 L553.0 31.03 L556.0 28.18 L559.0 25.33 L562.0 22.48 L565.0 19.63 L568.0 16.78 L571.0 13.93 L574.0 11.08 L577.0 8.23 L580.0 5.38 L583.0 2.53 L586.0 -0.32 L589.0 -3.17 L592.0 -6.02"/><path d="M530.0 62.00 L533.0 59.15 L536.0 56.30 L539.0 53.45 L542.0 50.60 L545.0 47.75 L548.0 44.90 L551.0 42.05 L554.0 39.20 L557.0 36.35 L560.0 33.50 L563.0 30.65 L566.0 27.80 L569.0 24.95 L572.0 22.10 L575.0 19.25 L578.0 16.40 L581.0 13.55 L584.0 10.70 L587.0 7.85 L590.0 5.00 L593.0 2.15 L596.0 -0.70 L599.0 -3.55 L602.0 -6.40"/><path d="M540.0 62.00 L543.0 59.15 L546.0 56.30 L549.0 53.45 L552.0 50.60 L555.0 47.75 L558.0 44.90 L561.0 42.05 L564.0 39.20 L567.0 36.35 L570.0 33.50 L573.0 30.65 L576.0 27.80 L579.0 24.95 L582.0 22.10 L585.0 19.25 L588.0 16.40 L591.0 13.55 L594.0 10.70 L597.0 7.85 L600.0 5.00 L603.0 2.15 L606.0 -0.70 L609.0 -3.55 L612.0 -6.40"/><path d="M550.0 62.00 L553.0 59.15 L556.0 56.30 L559.0 53.45 L562.0 50.60 L565.0 47.75 L568.0 44.90 L571.0 42.05 L574.0 39.20 L577.0 36.35 L580.0 33.50 L583.0 30.65 L586.0 27.80 L589.0 24.95 L592.0 22.10 L595.0 19.25 L598.0 16.40 L601.0 13.55 L604.0 10.70 L607.0 7.85 L610.0 5.00 L613.0 2.15 L616.0 -0.70 L619.0 -3.55 L622.0 -6.40"/><path d="M560.0 62.00 L563.0 59.15 L566.0 56.30 L569.0 53.45 L572.0 50.60 L575.0 47.75 L578.0 44.90 L581.0 42.05 L584.0 39.20 L587.0 36.35 L590.0 33.50 L593.0 30.65 L596.0 27.80 L599.0 24.95 L602.0 22.10 L605.0 19.25 L608.0 16.40 L611.0 13.55 L614.0 10.70 L617.0 7.85 L620.0 5.00 L623.0 2.15 L626.0 -0.67 L629.0 -3.46 L632.0 -6.21"/><path d="M570.0 62.00 L573.0 59.15 L576.0 56.30 L579.0 53.45 L582.0 50.60 L585.0 47.75 L588.0 44.90 L591.0 42.05 L594.0 39.20 L597.0 36.35 L600.0 33.50 L603.0 30.65 L606.0 27.80 L609.0 24.95 L612.0 22.10 L615.0 19.25 L618.0 16.40 L621.0 13.55 L624.0 10.71 L627.0 7.90 L630.0 5.13 L633.0 2.38 L636.0 -0.33 L639.0 -3.01 L642.0 -5.67"/><path d="M580.0 62.00 L583.0 59.15 L586.0 56.30 L589.0 53.45 L592.0 50.60 L595.0 47.75 L598.0 44.90 L601.0 42.05 L604.0 39.20 L607.0 36.35 L610.0 33.50 L613.0 30.65 L616.0 27.80 L619.0 24.95 L622.0 22.10 L625.0 19.27 L628.0 16.47 L631.0 13.71 L634.0 10.97 L637.0 8.27 L640.0 5.60 L643.0 2.96 L646.0 0.35 L649.0 -2.23 L652.0 -4.77"/><path d="M590.0 62.00 L593.0 59.15 L596.0 56.30 L599.0 53.45 L602.0 50.60 L605.0 47.75 L608.0 44.90 L611.0 42.05 L614.0 39.20 L617.0 36.35 L620.0 33.50 L623.0 30.65 L626.0 27.83 L629.0 25.04 L632.0 22.29 L635.0 19.56 L638.0 16.87 L641.0 14.21 L644.0 11.58 L647.0 8.98 L650.0 6.42 L653.0 3.88 L656.0 1.38 L659.0 -1.09 L662.0 -3.53 L665.0 -5.94"/><path d="M600.0 62.00 L603.0 59.15 L606.0 56.30 L609.0 53.45 L612.0 50.60 L615.0 47.75 L618.0 44.90 L621.0 42.05 L624.0 39.21 L627.0 36.40 L630.0 33.63 L633.0 30.88 L636.0 28.17 L639.0 25.49 L642.0 22.83 L645.0 20.22 L648.0 17.63 L651.0 15.07 L654.0 12.55 L657.0 10.05 L660.0 7.59 L663.0 5.16 L666.0 2.76 L669.0 0.40 L672.0 -1.94 L675.0 -4.24"/><path d="M610.0 62.00 L613.0 59.15 L616.0 56.30 L619.0 53.45 L622.0 50.60 L625.0 47.77 L628.0 44.97 L631.0 42.21 L634.0 39.47 L637.0 36.77 L640.0 34.10 L643.0 31.46 L646.0 28.85 L649.0 26.27 L652.0 23.73 L655.0 21.21 L658.0 18.73 L661.0 16.28 L664.0 13.86 L667.0 11.47 L670.0 9.12 L673.0 6.79 L676.0 4.50 L679.0 2.24 L682.0 0.00 L685.0 -2.19 L688.0 -4.36"/><path d="M620.0 62.00 L623.0 59.15 L626.0 56.33 L629.0 53.54 L632.0 50.79 L635.0 48.07 L638.0 45.37 L641.0 42.71 L644.0 40.08 L647.0 37.48 L650.0 34.92 L653.0 32.38 L656.0 29.88 L659.0 27.41 L662.0 24.97 L665.0 22.56 L668.0 20.18 L671.0 17.83 L674.0 15.52 L677.0 13.24 L680.0 10.99 L683.0 8.77 L686.0 6.58 L689.0 4.42 L692.0 2.29 L695.0 0.20 L698.0 -1.86 L701.0 -3.89 L704.0 -5.89"/><path d="M630.0 62.00 L633.0 59.26 L636.0 56.54 L639.0 53.86 L642.0 51.21 L645.0 48.59 L648.0 46.00 L651.0 43.45 L654.0 40.92 L657.0 38.43 L660.0 35.97 L663.0 33.54 L666.0 31.14 L669.0 28.77 L672.0 26.44 L675.0 24.13 L678.0 21.86 L681.0 19.62 L684.0 17.41 L687.0 15.23 L690.0 13.08 L693.0 10.97 L696.0 8.89 L699.0 6.83 L702.0 4.81 L705.0 2.82 L708.0 0.87 L711.0 -1.06 L714.0 -2.95 L717.0 -4.82"/><path d="M640.0 62.00 L643.0 59.36 L646.0 56.75 L649.0 54.17 L652.0 51.63 L655.0 49.12 L658.0 46.63 L661.0 44.18 L664.0 41.76 L667.0 39.37 L670.0 37.02 L673.0 34.69 L676.0 32.40 L679.0 30.14 L682.0 27.91 L685.0 25.71 L688.0 23.54 L691.0 21.40 L694.0 19.30 L697.0 17.23 L700.0 15.19 L703.0 13.18 L706.0 11.20 L709.0 9.25 L712.0 7.33 L715.0 5.45 L718.0 3.60 L721.0 1.78 L724.0 -0.01 L727.0 -1.77 L730.0 -3.50 L733.0 -5.19"/><path d="M650.0 62.00 L653.0 59.47 L656.0 56.96 L659.0 54.49 L662.0 52.05 L665.0 49.64 L668.0 47.26 L671.0 44.92 L674.0 42.60 L677.0 40.32 L680.0 38.07 L683.0 35.85 L686.0 33.66 L689.0 31.50 L692.0 29.38 L695.0 27.28 L698.0 25.22 L701.0 23.19 L704.0 21.19 L707.0 19.22 L710.0 17.29 L713.0 15.38 L716.0 13.51 L719.0 11.66 L722.0 9.85 L725.0 8.08 L728.0 6.33 L731.0 4.61 L734.0 2.93 L737.0 1.27 L740.0 -0.35 L743.0 -1.94 L746.0 -3.50 L749.0 -5.02"/><path d="M660.0 62.00 L663.0 59.57 L666.0 57.17 L669.0 54.80 L672.0 52.47 L675.0 50.17 L678.0 47.89 L681.0 45.65 L684.0 43.44 L687.0 41.26 L690.0 39.12 L693.0 37.00 L696.0 34.92 L699.0 32.87 L702.0 30.85 L705.0 28.86 L708.0 26.90 L711.0 24.97 L714.0 23.08 L717.0 21.22 L720.0 19.39 L723.0 17.59 L726.0 15.82 L729.0 14.08 L732.0 12.37 L735.0 10.70 L738.0 9.06 L741.0 7.45 L744.0 5.87 L747.0 4.32 L750.0 2.80 L753.0 1.30 L756.0 -0.20 L759.0 -1.70 L762.0 -3.20"/><path d="M670.0 62.00 L673.0 59.67 L676.0 57.38 L679.0 55.12 L682.0 52.89 L685.0 50.69 L688.0 48.52 L691.0 46.39 L694.0 44.28 L697.0 42.21 L700.0 40.17 L703.0 38.16 L706.0 36.18 L709.0 34.23 L712.0 32.32 L715.0 30.43 L718.0 28.58 L721.0 26.76 L724.0 24.97 L727.0 23.21 L730.0 21.48 L733.0 19.79 L736.0 18.13 L739.0 16.49 L742.0 14.89 L745.0 13.33 L748.0 11.79 L751.0 10.28 L754.0 8.78 L757.0 7.28 L760.0 5.78"/><path d="M680.0 62.00 L683.0 59.78 L686.0 57.59 L689.0 55.43 L692.0 53.31 L695.0 51.21 L698.0 49.15 L701.0 47.12 L704.0 45.12 L707.0 43.15 L710.0 41.22 L713.0 39.31 L716.0 37.44 L719.0 35.60 L722.0 33.79 L725.0 32.01 L728.0 30.26 L731.0 28.54 L734.0 26.86 L737.0 25.21 L740.0 23.59 L743.0 22.00 L746.0 20.44 L749.0 18.91 L752.0 17.41 L755.0 15.91 L758.0 14.41 L761.0 12.91"/><path d="M690.0 62.00 L693.0 59.88 L696.0 57.80 L699.0 55.75 L702.0 53.73 L705.0 51.74 L708.0 49.78 L711.0 47.86 L714.0 45.96 L717.0 44.10 L720.0 42.27 L723.0 40.47 L726.0 38.70 L729.0 36.96 L732.0 35.26 L735.0 33.58 L738.0 31.94 L741.0 30.33 L744.0 28.75 L747.0 27.20 L750.0 25.68 L753.0 24.18 L756.0 22.68 L759.0 21.18 L762.0 19.68"/><path d="M700.0 62.00 L703.0 59.99 L706.0 58.01 L709.0 56.06 L712.0 54.15 L715.0 52.27 L718.0 50.41 L721.0 48.59 L724.0 46.80 L727.0 45.04 L730.0 43.32 L733.0 41.62 L736.0 39.96 L739.0 38.33 L742.0 36.73 L745.0 35.16 L748.0 33.62 L751.0 32.11 L754.0 30.61 L757.0 29.11 L760.0 27.61"/><path d="M710.0 62.00 L713.0 60.09 L716.0 58.22 L719.0 56.38 L722.0 54.57 L725.0 52.79 L728.0 51.04 L731.0 49.33 L734.0 47.64 L737.0 45.99 L740.0 44.37 L743.0 42.78 L746.0 41.22 L749.0 39.69 L752.0 38.19 L755.0 36.69 L758.0 35.19 L761.0 33.69"/><path d="M720.0 62.00 L723.0 60.20 L726.0 58.43 L729.0 56.69 L732.0 54.99 L735.0 53.31 L738.0 51.67 L741.0 50.06 L744.0 48.48 L747.0 46.93 L750.0 45.42 L753.0 43.92 L756.0 42.42 L759.0 40.92 L762.0 39.42"/><path d="M730.0 62.00 L733.0 60.30 L736.0 58.64 L739.0 57.01 L742.0 55.41 L745.0 53.84 L748.0 52.30 L751.0 50.80 L754.0 49.30 L757.0 47.80 L760.0 46.30"/><path d="M740.0 62.00 L743.0 60.41 L746.0 58.85 L749.0 57.32 L752.0 55.82 L755.0 54.32 L758.0 52.82 L761.0 51.32"/><path d="M750.0 62.00 L753.0 60.50 L756.0 59.00 L759.0 57.50 L762.0 56.00"/><path d="M760.0 62.00"/><path d="M770.0 62.00"/><path d="M780.0 62.00"/><path d="M790.0 62.00"/><path d="M800.0 62.00"/><path d="M810.0 62.00"/><path d="M820.0 62.00"/><path d="M830.0 62.00"/><path d="M840.0 62.00"/><path d="M850.0 62.00"/><path d="M860.0 62.00"/><path d="M870.0 62.00"/><path d="M880.0 62.00"/><path d="M890.0 62.00"/><path d="M900.0 62.00"/><path d="M910.0 62.00"/><path d="M920.0 62.00"/><path d="M930.0 62.00"/><path d="M940.0 62.00"/><path d="M950.0 62.00"/><path d="M960.0 62.00"/><path d="M970.0 62.00"/><path d="M980.0 62.00"/><path d="M990.0 62.00"/></g><path d="M260 -1 L264 0.00 L268 0.00 L272 0.00 L276 0.01 L280 0.06 L284 0.16 L288 0.34 L292 0.83 L296 1.99 L300 3.84 L304 5.98 L308 8.16 L312 10.29 L316 12.26 L320 14.03 L324 15.70 L328 17.33 L332 18.91 L336 20.39 L340 21.82 L344 23.21 L348 24.50 L352 25.59 L356 26.53 L360 27.42 L364 28.30 L368 29.18 L372 30.06 L376 30.94 L380 31.77 L384 32.48 L388 32.97 L392 33.33 L396 33.65 L400 33.97 L404 34.29 L408 34.61 L412 34.91 L416 35.16 L420 35.28 L424 35.26 L428 35.17 L432 35.05 L436 34.82 L440 34.42 L444 33.91 L448 33.34 L452 32.64 L456 31.70 L460 30.55 L464 29.32 L468 27.97 L472 26.40 L476 24.58 L480 22.66 L484 20.66 L488 18.44 L492 15.88 L496 13.10 L500 10.29 L504 7.58 L508 5.10 L512 2.93 L516 1.33 L520 0.53 L524 0.23 L528 0.10 L532 0.03 L536 0.00 L540 0.00 L544 0.00 L548 0.00 L552 0.00 L556 -1 Z" fill="#030820"/></svg><div class="a" style="left:15px;top:12px;width:19.6px;height:19.6px;border-radius:50%;background:#eceff5"><svg class="a" style="left:5px;top:7.3px" width="9" height="6" viewBox="0 0 9 6"><rect x="0.2" y="0.4" width="8.6" height="5" rx="2.5" fill="#63aae6"/><circle cx="3.3" cy="2.9" r="1.5" fill="none" stroke="#fff" stroke-width="0.7"/><circle cx="5.9" cy="2.9" r="1.1" fill="#fff"/></svg></div><div class="a" style="left:39.8px;top:13.6px;font-size:13.2px;letter-spacing:0.19px;-webkit-text-stroke:0.18px #fff;color:#fff;line-height:16px;white-space:nowrap">Insight Control</div><div class="a" style="left:15.3px;top:37.3px;font-size:6.82px;color:#e6e9f2;line-height:8px;white-space:nowrap">Customize the insights that power your content suggestions.</div></div><div class="a" style="left:15.3px;top:124px;font-size:9px;color:#2e2e38;line-height:11px;white-space:nowrap;-webkit-text-stroke:0.2px #2e2e38">Your Insights (97)</div><div class="a" style="left:90px;top:126.2px"><svg class="inf" width="6.8" height="6.8" viewBox="0 0 10 10"><circle cx="5" cy="5" r="4.1" stroke="#444" stroke-width="1.1" fill="none"/><path d="M5 4.4 V7.4" stroke="#444" stroke-width="1.2"/><circle cx="5" cy="2.9" r="0.7" fill="#444"/></svg></div><div class="a" style="left:381px;top:121.5px;width:286.5px;height:15.3px;border:0.9px solid #d8d9e8;border-radius:2.5px;background:#fff"><svg class="a" style="left:3.6px;top:4px" width="6.2" height="6.2" viewBox="0 0 8 8"><circle cx="3.2" cy="3.2" r="2.4" stroke="#9a9aa4" stroke-width="1" fill="none"/><path d="M5 5 L7.3 7.3" stroke="#9a9aa4" stroke-width="1.1"/></svg><span class="a" style="left:14.3px;top:0.5px;line-height:13.5px;font-size:6.7px;color:#b3b4bd">Search Insights</span></div><div class="a" style="left:677px;top:121.9px;width:58px;height:14.8px;border-radius:2px;background:#1b76d2;color:#fff;font-size:6.75px;line-height:14.8px;-webkit-text-stroke:0.15px #fff;white-space:nowrap"><span class="a" style="left:6.8px;top:0.6px;font-size:8px;-webkit-text-stroke:0">+</span><span class="a" style="left:17px;top:0.6px">Create New</span></div><div class="a" style="left:15px;top:144px;width:721px;height:326px;overflow:hidden;border-radius:2.5px 2.5px 0 0"><div class="a" style="left:0;top:0;width:716px;height:400px;border:1px solid #dcdfee;border-radius:2.5px;background:#fff"></div><div class="a" style="left:1px;top:1px;width:715px;height:24px;background:#f8f9fb;border-bottom:1px solid #dddfee"></div><div class="cb" style="left:10.3px;top:8.5px"></div><div class="hd" style="left:34.6px;top:9.0px">On/Off</div><div class="a" style="left:67.4px;top:9.800000000000011px"><svg class="srt" width="3" height="6" viewBox="0 0 3 6"><path d="M0.3 2.2 L1.5 0.8 L2.7 2.2 M0.3 3.8 L1.5 5.2 L2.7 3.8" stroke="#8a90b8" stroke-width="0.6" fill="none"/></svg></div><div class="hd" style="left:77.5px;top:9.0px">Insight Name</div><div class="a" style="left:124.19999999999999px;top:9.800000000000011px"><svg class="srt" width="3" height="6" viewBox="0 0 3 6"><path d="M0.3 2.2 L1.5 0.8 L2.7 2.2 M0.3 3.8 L1.5 5.2 L2.7 3.8" stroke="#8a90b8" stroke-width="0.6" fill="none"/></svg></div><div class="a" style="left:319.9px;top:9.0px"><svg class="inf" width="6.4" height="6.4" viewBox="0 0 10 10"><circle cx="5" cy="5" r="4.1" stroke="#3e3e46" stroke-width="1.1" fill="none"/><path d="M5 4.4 V7.4" stroke="#3e3e46" stroke-width="1.2"/><circle cx="5" cy="2.9" r="0.7" fill="#3e3e46"/></svg></div><div class="hd" style="left:328.9px;top:9.0px">Type</div><div class="a" style="left:348.9px;top:9.800000000000011px"><svg class="srt" width="3" height="6" viewBox="0 0 3 6"><path d="M0.3 2.2 L1.5 0.8 L2.7 2.2 M0.3 3.8 L1.5 5.2 L2.7 3.8" stroke="#8a90b8" stroke-width="0.6" fill="none"/></svg></div><div class="a" style="left:415.6px;top:9.0px"><svg class="inf" width="6.4" height="6.4" viewBox="0 0 10 10"><circle cx="5" cy="5" r="4.1" stroke="#3e3e46" stroke-width="1.1" fill="none"/><path d="M5 4.4 V7.4" stroke="#3e3e46" stroke-width="1.2"/><circle cx="5" cy="2.9" r="0.7" fill="#3e3e46"/></svg></div><div class="hd" style="left:424px;top:9.0px">Target</div><div class="a" style="left:449px;top:9.800000000000011px"><svg class="srt" width="3" height="6" viewBox="0 0 3 6"><path d="M0.3 2.2 L1.5 0.8 L2.7 2.2 M0.3 3.8 L1.5 5.2 L2.7 3.8" stroke="#8a90b8" stroke-width="0.6" fill="none"/></svg></div><div class="hd" style="left:473px;top:9.0px">Last Edited</div><div class="a" style="left:513px;top:9.800000000000011px"><svg class="srt" width="3" height="6" viewBox="0 0 3 6"><path d="M0.3 2.2 L1.5 0.8 L2.7 2.2 M0.3 3.8 L1.5 5.2 L2.7 3.8" stroke="#8a90b8" stroke-width="0.6" fill="none"/></svg></div><div class="a" style="left:544.8px;top:9.0px"><svg class="inf" width="6.4" height="6.4" viewBox="0 0 10 10"><circle cx="5" cy="5" r="4.1" stroke="#3e3e46" stroke-width="1.1" fill="none"/><path d="M5 4.4 V7.4" stroke="#3e3e46" stroke-width="1.2"/><circle cx="5" cy="2.9" r="0.7" fill="#3e3e46"/></svg></div><div class="hd" style="left:553.1px;top:9.0px">Talking Points to Feed into AI</div><div class="a" style="left:648.5px;top:9.800000000000011px"><svg class="srt" width="3" height="6" viewBox="0 0 3 6"><path d="M0.3 2.2 L1.5 0.8 L2.7 2.2 M0.3 3.8 L1.5 5.2 L2.7 3.8" stroke="#8a90b8" stroke-width="0.6" fill="none"/></svg></div><div class="a" style="left:1px;top:29px;width:715px;height:31px;background:#fff;border-top:1px solid #e2e4f1"></div><div class="cb" style="left:10.3px;top:40.5px"></div><div class="a" style="left:34.8px;top:39.19999999999999px"><div class="tg off"><span class="kn"></span><span class="tt">OFF</span></div></div><div class="txt" style="left:77.7px;top:40px">Company description</div><div class="badge li" style="left:320.2px;top:38.69999999999999px">LinkedIn</div><svg class="a" style="left:415.6px;top:40.400000000000006px" width="7.6" height="7.6" viewBox="0 0 7.6 7.6"><path d="M0.2 1.2 Q0.2 0.4 1 0.4 H2.6 L3.3 1.1 H4.6 V7.3 H1 Q0.2 7.3 0.2 6.5 Z" fill="#9256d8"/><path d="M4.6 2.4 H5.9 Q7.4 2.4 7.4 4.85 Q7.4 7.3 5.9 7.3 H4.6 Z" fill="#9a62dc"/><path d="M5.7 3.7 V5.9" stroke="#fff" stroke-width="0.55"/></svg><div class="txt" style="left:473.3px;top:40px">January 17, 2024</div><div class="txt cta" style="left:545px;top:40px">Click to add</div><div class="dots" style="left:696.1px;top:38px"><svg class="a" style="left:0;top:0" width="12" height="12" viewBox="0 0 12 12"><circle cx="3.3" cy="5.2" r="0.65" fill="#94959f"/><circle cx="5.5" cy="5.2" r="0.65" fill="#94959f"/><circle cx="7.7" cy="5.2" r="0.65" fill="#94959f"/></svg></div><div class="a" style="left:1px;top:60px;width:715px;height:31px;background:#fff;border-top:1px solid #e2e4f1"></div><div class="cb" style="left:10.3px;top:71.5px"></div><div class="a" style="left:34.8px;top:70.80000000000001px"><div class="tg on"><span class="tt">ON</span><span class="kn"></span></div></div><div class="txt" style="left:77.7px;top:71px">Job description</div><div class="badge li" style="left:320.2px;top:69.69999999999999px">LinkedIn</div><svg class="a" style="left:415.6px;top:71.4px" width="7.6" height="7.6" viewBox="0 0 7.6 7.6"><path d="M0.2 1.2 Q0.2 0.4 1 0.4 H2.6 L3.3 1.1 H4.6 V7.3 H1 Q0.2 7.3 0.2 6.5 Z" fill="#9256d8"/><path d="M4.6 2.4 H5.9 Q7.4 2.4 7.4 4.85 Q7.4 7.3 5.9 7.3 H4.6 Z" fill="#9a62dc"/><path d="M5.7 3.7 V5.9" stroke="#fff" stroke-width="0.55"/></svg><div class="txt" style="left:473.3px;top:71px">-</div><div class="txt cta" style="left:545px;top:71px">Click to add</div><div class="dots" style="left:696.1px;top:69px"><svg class="a" style="left:0;top:0" width="12" height="12" viewBox="0 0 12 12"><circle cx="3.3" cy="5.2" r="0.65" fill="#94959f"/><circle cx="5.5" cy="5.2" r="0.65" fill="#94959f"/><circle cx="7.7" cy="5.2" r="0.65" fill="#94959f"/></svg></div><div class="a" style="left:1px;top:91px;width:715px;height:31px;background:#fff;border-top:1px solid #e2e4f1"></div><div class="cb" style="left:10.3px;top:102.5px"></div><div class="a" style="left:34.8px;top:101.80000000000001px"><div class="tg on"><span class="tt">ON</span><span class="kn"></span></div></div><div class="txt" style="left:77.7px;top:102px">LinkedIn About me</div><div class="badge li" style="left:320.2px;top:100.69999999999999px">LinkedIn</div><svg class="a" style="left:415.6px;top:102.4px" width="7.6" height="7.6" viewBox="0 0 7.6 7.6"><path d="M0.2 1.2 Q0.2 0.4 1 0.4 H2.6 L3.3 1.1 H4.6 V7.3 H1 Q0.2 7.3 0.2 6.5 Z" fill="#9256d8"/><path d="M4.6 2.4 H5.9 Q7.4 2.4 7.4 4.85 Q7.4 7.3 5.9 7.3 H4.6 Z" fill="#9a62dc"/><path d="M5.7 3.7 V5.9" stroke="#fff" stroke-width="0.55"/></svg><div class="txt" style="left:473.3px;top:102px">-</div><div class="txt cta" style="left:545px;top:102px">Click to add</div><div class="dots" style="left:696.1px;top:100px"><svg class="a" style="left:0;top:0" width="12" height="12" viewBox="0 0 12 12"><circle cx="3.3" cy="5.2" r="0.65" fill="#94959f"/><circle cx="5.5" cy="5.2" r="0.65" fill="#94959f"/><circle cx="7.7" cy="5.2" r="0.65" fill="#94959f"/></svg></div><div class="a" style="left:1px;top:122px;width:715px;height:31px;background:#fff;border-top:1px solid #e2e4f1"></div><div class="cb" style="left:10.3px;top:133.5px"></div><div class="a" style="left:34.8px;top:132.8px"><div class="tg on"><span class="tt">ON</span><span class="kn"></span></div></div><div class="txt" style="left:77.7px;top:133px">Acquisition</div><div class="badge nw" style="left:320.2px;top:131.7px">News</div><svg class="a" style="left:415.6px;top:133.39999999999998px" width="7.6" height="7.6" viewBox="0 0 7.6 7.6"><path d="M0.2 1.2 Q0.2 0.4 1 0.4 H2.6 L3.3 1.1 H4.6 V7.3 H1 Q0.2 7.3 0.2 6.5 Z" fill="#9256d8"/><path d="M4.6 2.4 H5.9 Q7.4 2.4 7.4 4.85 Q7.4 7.3 5.9 7.3 H4.6 Z" fill="#9a62dc"/><path d="M5.7 3.7 V5.9" stroke="#fff" stroke-width="0.55"/></svg><div class="txt" style="left:473.3px;top:133px">December 14, 2023</div><div class="txt" style="left:544.7px;top:133px">Autobound can help ramp new reps to be mor...</div><div class="dots" style="left:696.1px;top:131px"><svg class="a" style="left:0;top:0" width="12" height="12" viewBox="0 0 12 12"><circle cx="3.3" cy="5.2" r="0.65" fill="#94959f"/><circle cx="5.5" cy="5.2" r="0.65" fill="#94959f"/><circle cx="7.7" cy="5.2" r="0.65" fill="#94959f"/></svg></div><div class="a" style="left:1px;top:153px;width:715px;height:31px;background:#fff;border-top:1px solid #e2e4f1"></div><div class="cb" style="left:10.3px;top:164.5px"></div><div class="a" style="left:34.8px;top:163.2px"><div class="tg off"><span class="kn"></span><span class="tt">OFF</span></div></div><div class="txt" style="left:77.7px;top:164px">Asset sales/divestitures</div><div class="badge nw" style="left:320.2px;top:162.7px">News</div><svg class="a" style="left:415.6px;top:164.39999999999998px" width="7.6" height="7.6" viewBox="0 0 7.6 7.6"><path d="M0.2 1.2 Q0.2 0.4 1 0.4 H2.6 L3.3 1.1 H4.6 V7.3 H1 Q0.2 7.3 0.2 6.5 Z" fill="#9256d8"/><path d="M4.6 2.4 H5.9 Q7.4 2.4 7.4 4.85 Q7.4 7.3 5.9 7.3 H4.6 Z" fill="#9a62dc"/><path d="M5.7 3.7 V5.9" stroke="#fff" stroke-width="0.55"/></svg><div class="txt" style="left:473.3px;top:164px">-</div><div class="txt cta" style="left:545px;top:164px">Click to add</div><div class="dots" style="left:696.1px;top:162px"><svg class="a" style="left:0;top:0" width="12" height="12" viewBox="0 0 12 12"><circle cx="3.3" cy="5.2" r="0.65" fill="#94959f"/><circle cx="5.5" cy="5.2" r="0.65" fill="#94959f"/><circle cx="7.7" cy="5.2" r="0.65" fill="#94959f"/></svg></div><div class="a" style="left:1px;top:184px;width:715px;height:31px;background:#fff;border-top:1px solid #e2e4f1"></div><div class="cb" style="left:10.3px;top:195.5px"></div><div class="a" style="left:34.8px;top:194.8px"><div class="tg on"><span class="tt">ON</span><span class="kn"></span></div></div><div class="txt" style="left:77.7px;top:195px">Award</div><div class="badge nw" style="left:320.2px;top:193.7px">News</div><svg class="a" style="left:415.6px;top:195.39999999999998px" width="7.6" height="7.6" viewBox="0 0 7.6 7.6"><path d="M0.2 1.2 Q0.2 0.4 1 0.4 H2.6 L3.3 1.1 H4.6 V7.3 H1 Q0.2 7.3 0.2 6.5 Z" fill="#9256d8"/><path d="M4.6 2.4 H5.9 Q7.4 2.4 7.4 4.85 Q7.4 7.3 5.9 7.3 H4.6 Z" fill="#9a62dc"/><path d="M5.7 3.7 V5.9" stroke="#fff" stroke-width="0.55"/></svg><div class="txt" style="left:473.3px;top:195px">-</div><div class="txt cta" style="left:545px;top:195px">Click to add</div><div class="dots" style="left:696.1px;top:193px"><svg class="a" style="left:0;top:0" width="12" height="12" viewBox="0 0 12 12"><circle cx="3.3" cy="5.2" r="0.65" fill="#94959f"/><circle cx="5.5" cy="5.2" r="0.65" fill="#94959f"/><circle cx="7.7" cy="5.2" r="0.65" fill="#94959f"/></svg></div><div class="a" style="left:1px;top:215px;width:715px;height:31px;background:#fff;border-top:1px solid #e2e4f1"></div><div class="cb" style="left:10.3px;top:226.5px"></div><div class="a" style="left:34.8px;top:225.2px"><div class="tg off"><span class="kn"></span><span class="tt">OFF</span></div></div><div class="txt" style="left:77.7px;top:226px">Closes office</div><div class="badge nw" style="left:320.2px;top:224.7px">News</div><svg class="a" style="left:415.6px;top:226.39999999999998px" width="7.6" height="7.6" viewBox="0 0 7.6 7.6"><path d="M0.2 1.2 Q0.2 0.4 1 0.4 H2.6 L3.3 1.1 H4.6 V7.3 H1 Q0.2 7.3 0.2 6.5 Z" fill="#9256d8"/><path d="M4.6 2.4 H5.9 Q7.4 2.4 7.4 4.85 Q7.4 7.3 5.9 7.3 H4.6 Z" fill="#9a62dc"/><path d="M5.7 3.7 V5.9" stroke="#fff" stroke-width="0.55"/></svg><div class="txt" style="left:473.3px;top:226px">-</div><div class="txt cta" style="left:545px;top:226px">Click to add</div><div class="dots" style="left:696.1px;top:224px"><svg class="a" style="left:0;top:0" width="12" height="12" viewBox="0 0 12 12"><circle cx="3.3" cy="5.2" r="0.65" fill="#94959f"/><circle cx="5.5" cy="5.2" r="0.65" fill="#94959f"/><circle cx="7.7" cy="5.2" r="0.65" fill="#94959f"/></svg></div><div class="a" style="left:1px;top:246px;width:715px;height:31px;background:#fff;border-top:1px solid #e2e4f1"></div><div class="cb" style="left:10.3px;top:257.5px"></div><div class="a" style="left:34.8px;top:256.2px"><div class="tg off"><span class="kn"></span><span class="tt">OFF</span></div></div><div class="txt" style="left:77.7px;top:257px">Company buys assets</div><div class="badge nw" style="left:320.2px;top:255.7px">News</div><svg class="a" style="left:415.6px;top:257.4px" width="7.6" height="7.6" viewBox="0 0 7.6 7.6"><path d="M0.2 1.2 Q0.2 0.4 1 0.4 H2.6 L3.3 1.1 H4.6 V7.3 H1 Q0.2 7.3 0.2 6.5 Z" fill="#9256d8"/><path d="M4.6 2.4 H5.9 Q7.4 2.4 7.4 4.85 Q7.4 7.3 5.9 7.3 H4.6 Z" fill="#9a62dc"/><path d="M5.7 3.7 V5.9" stroke="#fff" stroke-width="0.55"/></svg><div class="txt" style="left:473.3px;top:257px">-</div><div class="txt cta" style="left:545px;top:257px">Click to add</div><div class="dots" style="left:696.1px;top:255px"><svg class="a" style="left:0;top:0" width="12" height="12" viewBox="0 0 12 12"><circle cx="3.3" cy="5.2" r="0.65" fill="#94959f"/><circle cx="5.5" cy="5.2" r="0.65" fill="#94959f"/><circle cx="7.7" cy="5.2" r="0.65" fill="#94959f"/></svg></div><div class="a" style="left:1px;top:277px;width:715px;height:31px;background:#fff;border-top:1px solid #e2e4f1"></div><div class="cb" style="left:10.3px;top:288.5px"></div><div class="a" style="left:34.8px;top:287.8px"><div class="tg on"><span class="tt">ON</span><span class="kn"></span></div></div><div class="txt" style="left:77.7px;top:288px">Company hires new leadership</div><div class="badge nw" style="left:320.2px;top:286.7px">News</div><svg class="a" style="left:415.6px;top:288.4px" width="7.6" height="7.6" viewBox="0 0 7.6 7.6"><path d="M0.2 1.2 Q0.2 0.4 1 0.4 H2.6 L3.3 1.1 H4.6 V7.3 H1 Q0.2 7.3 0.2 6.5 Z" fill="#9256d8"/><path d="M4.6 2.4 H5.9 Q7.4 2.4 7.4 4.85 Q7.4 7.3 5.9 7.3 H4.6 Z" fill="#9a62dc"/><path d="M5.7 3.7 V5.9" stroke="#fff" stroke-width="0.55"/></svg><div class="txt" style="left:473.3px;top:288px">December 11, 2023</div><div class="txt cta" style="left:545px;top:288px">Click to add</div><div class="dots" style="left:696.1px;top:286px"><svg class="a" style="left:0;top:0" width="12" height="12" viewBox="0 0 12 12"><circle cx="3.3" cy="5.2" r="0.65" fill="#94959f"/><circle cx="5.5" cy="5.2" r="0.65" fill="#94959f"/><circle cx="7.7" cy="5.2" r="0.65" fill="#94959f"/></svg></div><div class="a" style="left:1px;top:308px;width:715px;height:31px;background:#fff;border-top:1px solid #e2e4f1"></div><div class="cb" style="left:10.3px;top:319.5px"></div><div class="a" style="left:34.8px;top:318.2px"><div class="tg off"><span class="kn"></span><span class="tt">OFF</span></div></div><div class="txt" style="left:77.7px;top:319px">Company makes investment</div><div class="badge nw" style="left:320.2px;top:317.7px">News</div><svg class="a" style="left:415.6px;top:319.4px" width="7.6" height="7.6" viewBox="0 0 7.6 7.6"><path d="M0.2 1.2 Q0.2 0.4 1 0.4 H2.6 L3.3 1.1 H4.6 V7.3 H1 Q0.2 7.3 0.2 6.5 Z" fill="#9256d8"/><path d="M4.6 2.4 H5.9 Q7.4 2.4 7.4 4.85 Q7.4 7.3 5.9 7.3 H4.6 Z" fill="#9a62dc"/><path d="M5.7 3.7 V5.9" stroke="#fff" stroke-width="0.55"/></svg><div class="txt" style="left:473.3px;top:319px">December 7, 2023</div><div class="txt cta" style="left:545px;top:319px">Click to add</div><div class="dots" style="left:696.1px;top:317px"><svg class="a" style="left:0;top:0" width="12" height="12" viewBox="0 0 12 12"><circle cx="3.3" cy="5.2" r="0.65" fill="#94959f"/><circle cx="5.5" cy="5.2" r="0.65" fill="#94959f"/><circle cx="7.7" cy="5.2" r="0.65" fill="#94959f"/></svg></div><div class="a" style="left:716px;top:1px;width:4px;height:400px;background:#dcdde2"></div><div class="a" style="left:716.5px;top:66px;width:3.5px;height:35px;background:#7d8194"></div></div><div class="a" style="left:0;top:482.5px;width:750px;height:2.5px;background:#fbfbfc"></div><div class="a" style="left:-11.2px;top:436.2px;width:21.6px;height:21.6px;border-radius:50%;background:#fff;box-shadow:0 0 5px rgba(0,0,0,0.18)"><div class="a" style="left:2.2px;top:2.2px;width:17.2px;height:17.2px;border-radius:50%;border:2.1px solid #2f8ee0"></div></div><div class="a" style="left:718.6px;top:438.9px;width:20.6px;height:20.6px;border-radius:50%;background:#4bbde9;box-shadow:0 1px 4px rgba(0,0,0,0.15)"><svg class="a" style="left:5.5px;top:5.1px" width="10" height="10.5" viewBox="0 0 10 10.5"><path d="M1 0.2 H8.2 Q9 0.2 9 1 V10 L7.3 8.7 H1 Q0.2 8.7 0.2 7.9 V1 Q0.2 0.2 1 0.2 Z" fill="#fff"/><path d="M2.1 6.1 Q2.2 7.1 4.6 7.1 Q7 7.1 7.1 6.1" stroke="#4bbde9" stroke-width="0.6" fill="none"/></svg></div></body></html>
